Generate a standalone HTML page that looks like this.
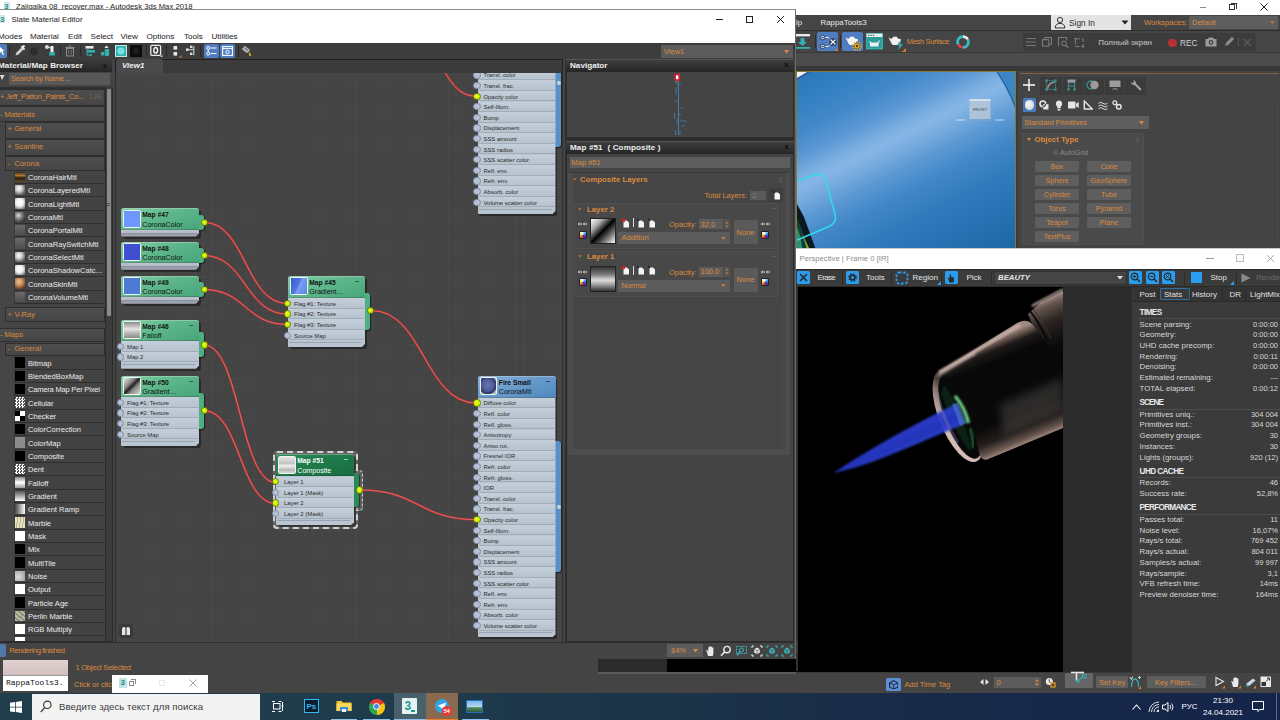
<!DOCTYPE html><html><head><meta charset="utf-8"><title>Slate Material Editor</title><style>
html,body{margin:0;padding:0}
body{width:1280px;height:720px;overflow:hidden;position:relative;background:#444;font-family:"Liberation Sans",sans-serif;font-size:7.5px;color:#e6e6e6}
div,span,svg{position:absolute;box-sizing:border-box}
.t{white-space:nowrap;line-height:1}
.o{color:#dc8a40}
.w{color:#e8e8e8}
.b{font-weight:bold}
</style></head><body>
<div style="left:0px;top:0px;width:1280px;height:15px;background:#fff"></div>
<span class="t" style="left:16px;top:3px;color:#222;font-size:7.7px">Zajigalka 08_recover.max - Autodesk 3ds Max 2018</span>
<div style="left:3.5px;top:2px;width:6.5px;height:8px;background:#cfe9e8;border-radius:1px"></div>
<span class="t" style="left:4.3px;top:3px;color:#16908c;font-size:7.500px;font-weight:bold">3</span>
<div style="left:1199.5px;top:7px;width:6.5px;height:1px;background:#8a8a8a"></div>
<div style="left:1229px;top:4px;width:6px;height:6px;border:1px solid #333"></div>
<div style="left:1231px;top:2.5px;width:6px;height:6px;border:1px solid #333;border-left:none;border-bottom:none"></div>
<svg style="left:1259.500px;top:3px" width="8" height="8" viewBox="0 0 8 8"><path d="M0.500 0.500L7.500 7.500M7.500 0.500L0.500 7.500" stroke="#222" stroke-width="1" fill="none"/></svg>
<div style="left:0px;top:15px;width:1280px;height:15px;background:#454545"></div>
<span class="t" style="left:796px;top:19px;color:#e8e8e8;font-size:7.9px">lp</span>
<span class="t" style="left:820.5px;top:19px;color:#e8e8e8;font-size:7.9px">RappaTools3</span>
<div style="left:1051px;top:15px;width:80px;height:15px;background:#e4e4e4"></div>
<span class="t" style="left:1069px;top:19px;color:#2a2a2a;font-size:8.300px">Sign In</span>
<svg style="left:1054px;top:16px" width="12" height="13" viewBox="0 0 12 13"><circle cx="6" cy="4" r="2.6" fill="none" stroke="#333" stroke-width="1"/><path d="M1.2 12c0-3.2 2-4.6 4.8-4.6s4.8 1.4 4.8 4.6z" fill="none" stroke="#333" stroke-width="1"/></svg>
<svg style="left:1121px;top:20px" width="8" height="5" viewBox="0 0 8 5"><path d="M0.5 0.5L7.5 0.5L4 4.5z" fill="#222"/></svg>
<span class="t o" style="left:1144px;top:19px;font-size:7.5px">Workspaces:</span>
<div style="left:1189px;top:16px;width:89px;height:13px;background:#5e5e5e"></div>
<span class="t o" style="left:1192px;top:19px;font-size:7.5px">Default</span>
<svg style="left:1269.500px;top:21px" width="4.500" height="3.500" viewBox="0 0 6 4"><path d="M0 0L6 0L3 4z" fill="#b8743a"/></svg>
<div style="left:0px;top:30px;width:1280px;height:1px;background:#2e2e2e"></div>
<div style="left:0px;top:31px;width:1280px;height:21px;background:#454545"></div>
<svg style="left:796px;top:33px" width="15" height="17" viewBox="0 0 15 17"><rect x="0" y="1" width="14" height="2.4" fill="#e8e8e8"/><path d="M4.5 5h4v4h2.5L6.5 13 2 9h2.5z" fill="#35b0b0"/><rect x="0" y="14" width="14" height="1.8" fill="#35b0b0"/></svg>
<div style="left:815px;top:35px;width:1px;height:13px;background:#2c2c2c"></div>
<div style="left:817px;top:32px;width:21px;height:19px;background:#4f7dc0;border-radius:2px"></div>
<svg style="left:819px;top:33.500px" width="18" height="16" viewBox="0 0 18 16"><path d="M5.500 3.500h4l3.500 3.500M5.500 12.500h4l3.500-3.500" stroke="#e8e8e8" fill="none" stroke-width="1"/><circle cx="3.600" cy="3.500" r="2.400" fill="#b8c4d4" stroke="#2a3a5a" stroke-width=".9"/><circle cx="3.600" cy="12.500" r="2.400" fill="#b8c4d4" stroke="#2a3a5a" stroke-width=".9"/><path d="M2.400 3.500h2.400M2.400 12.500h2.400" stroke="#2a3a5a" stroke-width=".8"/><rect x="10.500" y="4.500" width="7" height="7" fill="#26344e"/><path d="M11.500 5.500l5 5M16.500 5.500l-5 5" stroke="#f0f0f0" stroke-width="1.300"/></svg>
<svg style="left:835px;top:48px" width="3" height="3" viewBox="0 0 3 3"><path d="M0 3h3V0z" fill="#d87a30"/></svg>
<div style="left:840px;top:35px;width:1px;height:13px;background:#2c2c2c"></div>
<div style="left:842px;top:32px;width:21px;height:19px;background:#4f7dc0;border-radius:2px"></div>
<svg style="left:845px;top:35px" width="14" height="11" viewBox="0 0 14 11"><path d="M0.500 2.500l3 1.500q0.500-1 1.500-1.400V1.800h4v0.800q1 0.400 1.500 1.400 2-0.500 2.500 0.800t-2 2.800q-0.500 1.600-2 2.400h-4q-1.800-1-2.200-3z" fill="#f4f4f4"/></svg>
<svg style="left:851.500px;top:40.500px" width="10" height="10" viewBox="0 0 10 10"><circle cx="5" cy="5" r="3" fill="#e8b020" stroke="#6a4a10" stroke-width=".6"/><circle cx="5" cy="5" r="4.300" fill="none" stroke="#e8b020" stroke-width="1.300" stroke-dasharray="1.400 1.300"/><circle cx="5" cy="5" r="1.200" fill="#4a3a20"/></svg>
<svg style="left:866px;top:33px" width="17" height="17" viewBox="0 0 17 17"><rect x="0.7" y="0.7" width="15.6" height="15" fill="#2a9c9c" stroke="#35b0b0" stroke-width="1.4"/><rect x="0.7" y="0.7" width="15.6" height="3.3" fill="#eee"/><path d="M2 2.3h1.4M4.4 2.3h1.4M6.8 2.3h1.4" stroke="#333" stroke-width="1"/><path d="M3 8.5h1.5l1 1h6l1.5-2h1l-1.5 3v3h-8.5v-3z" fill="#e8f4f4"/></svg>
<svg style="left:888px;top:35px" width="14" height="11" viewBox="0 0 14 11"><path d="M0.500 2.500l3 1.500q0.500-1 1.500-1.400V1.800h4v0.800q1 0.400 1.500 1.400 2-0.500 2.500 0.800t-2 2.800q-0.500 1.600-2 2.400h-4q-1.800-1-2.200-3z" fill="#f0f0f0"/></svg>
<svg style="left:896px;top:40px" width="8" height="10" viewBox="0 0 8 10"><path d="M5 0L1 5.5h2.6L2.4 10 7 4.2H4.4z" fill="#35b0b0"/></svg>
<svg style="left:902px;top:48px" width="4" height="4" viewBox="0 0 4 4"><path d="M0 4h4V0z" fill="#d87a30"/></svg>
<span class="t o" style="left:906.8px;top:38px;font-size:7.500px;letter-spacing:-0.325px">Mesh Surface</span>
<svg style="left:955px;top:34px" width="16" height="16" viewBox="0 0 16 16"><path d="M3.2 10.5A5.4 5.4 0 0 1 8 2.6" stroke="#35c0c4" stroke-width="2.6" fill="none"/><path d="M12.8 5.5A5.4 5.4 0 0 1 8 13.4" stroke="#35c0c4" stroke-width="2.6" fill="none"/><path d="M8 2.6A5.4 5.4 0 0 1 12.8 5.5" stroke="#e8e8e8" stroke-width="2.6" fill="none"/><path d="M8 13.4A5.4 5.4 0 0 1 3.2 10.5" stroke="#e04040" stroke-width="2.6" fill="none"/></svg>
<div style="left:1023px;top:33px;width:233px;height:18px;background:#3c3c3c;border-radius:2px"></div>
<svg style="left:1026px;top:37px" width="10" height="10" viewBox="0 0 10 10"><path d="M0 1.5h10M0 5h10M0 8.5h10" stroke="#777" stroke-width="1.1"/></svg>
<svg style="left:1041.500px;top:36.500px" width="10" height="10" viewBox="0 0 11 11"><rect x="0.5" y="3" width="7" height="7" fill="none" stroke="#888" stroke-width="1"/><path d="M3 3V0.5h7.5V8H7.5" fill="none" stroke="#888" stroke-width="1"/></svg>
<svg style="left:1057.500px;top:36.500px" width="11" height="11" viewBox="0 0 12 12"><path d="M0.5 10V0.5h9v3" fill="none" stroke="#888" stroke-width="1"/><circle cx="6.5" cy="7" r="2.6" fill="none" stroke="#888" stroke-width="1"/><path d="M8.5 9l2.5 2.5" stroke="#888" stroke-width="1.2"/></svg>
<svg style="left:1073.500px;top:36.500px" width="11" height="11" viewBox="0 0 12 12"><rect x="1.5" y="2" width="8.5" height="8.5" fill="none" stroke="#888" stroke-width="1" stroke-dasharray="5 2"/><circle cx="1.5" cy="2" r="1" fill="#888"/><circle cx="10" cy="10.5" r="1" fill="#888"/></svg>
<span class="t" style="left:1098.2px;top:39px;color:#a2a2a2;font-size:8px;font-weight:bold;letter-spacing:-0.265px">Полный экран</span>
<div style="left:1168px;top:38.5px;width:8.5px;height:8.5px;background:#b43434;border-radius:50%"></div>
<span class="t" style="left:1180px;top:39px;color:#d0d0d0;font-size:8.300px">REC</span>
<svg style="left:1205px;top:37px" width="12" height="10" viewBox="0 0 12 10"><path d="M0.5 2h2.5l1-1.5h4l1 1.5h2.500v7.5h-11z" fill="#9a9a9a"/><circle cx="6" cy="5.4" r="2.3" fill="#3c3c3c"/><circle cx="6" cy="5.4" r="1.2" fill="#9a9a9a"/></svg>
<svg style="left:1224px;top:36px" width="11" height="11" viewBox="0 0 11 11"><path d="M1 10l1-3.2L8 .8l2.2 2.2-6 6z" fill="#8a8a8a"/></svg>
<div style="left:1238px;top:38px;width:1px;height:8px;background:#555"></div>
<svg style="left:1243px;top:38px" width="9" height="9" viewBox="0 0 9 9"><path d="M1 1l7 7M8 1L1 8" stroke="#5c5c5c" stroke-width="1.1"/></svg>
<div style="left:0px;top:52px;width:1280px;height:14px;background:#4b4b4b"></div>
<div style="left:0px;top:52px;width:1280px;height:1px;background:#383838"></div>
<div style="left:0px;top:66px;width:1280px;height:5px;background:#383838"></div>
<div style="left:796px;top:71px;width:220px;height:178px;background:#2b7cbc;overflow:hidden;border:1px solid #857832"><div style="left:-1px;top:-1px;width:222px;height:180px;background:linear-gradient(153.4deg,#2a76b8 0%,#3380c2 12%,#4389ca 22%,#5a98d4 30%,#78acdf 36%,#86b6e6 40.5%,#78acdf 45%,#5c99d4 52%,#4388c8 60%,#327cbd 70%,#2873b4 82%,#1c66a4 100%)"></div><svg style="left:0;top:0" width="220" height="178" viewBox="796 71 220 178"><path d="M996 71C1004 82,1010 95,1016 110V71z" fill="#3c86c6"/><path d="M996 71C1004 82,1010 95,1016 110" stroke="#1a5c98" stroke-width="1.2" fill="none"/><path d="M796 71h10l-10 6z" fill="#f0f0f0"/><path d="M796 78l12-7" stroke="#3a3a9a" stroke-width="1"/><path d="M796 203L803 216 815 249H796z" fill="#0b1a22"/><path d="M796 217l5 12 4 20h-9z" fill="#15403a"/><path d="M796 226l3.500 10 2 13h-5.500z" fill="#23957a"/><path d="M801 232l5 17h3z" fill="#8aa828"/><path d="M792 182L814 173.500Q821 172 824 178L834 213Q836 221 829 225L794 240" stroke="#30dcf0" stroke-width="1.5" fill="none"/><rect x="968.500" y="98" width="21" height="20" fill="#b9c8d8" opacity=".85"/><rect x="968.500" y="98" width="21" height="2" fill="#d8e2ee" opacity=".9"/><path d="M955 119h9M994 119h9" stroke="#e4eef8" stroke-width=".8"/><path d="M966 119h26" stroke="#8aa8c8" stroke-width=".8"/><text x="979" y="110" font-size="4.200" fill="#3a4a5a" text-anchor="middle" font-family="Liberation Sans,sans-serif">FRONT</text></svg></div>
<div style="left:1016px;top:71px;width:2px;height:178px;background:#3a3a3a"></div>
<div style="left:1018px;top:71px;width:262px;height:178px;background:#444"></div>
<div style="left:1019.5px;top:72.5px;width:259px;height:1px;background:#86603e"></div>
<div style="left:1040px;top:77px;width:105.6px;height:17.6px;background:#3b3b3b"></div>
<div style="left:1062px;top:78px;width:1px;height:16px;background:#444"></div>
<div style="left:1082.7px;top:78px;width:1px;height:16px;background:#444"></div>
<div style="left:1103.5px;top:78px;width:1px;height:16px;background:#444"></div>
<div style="left:1124.3px;top:78px;width:1px;height:16px;background:#444"></div>
<svg style="left:1023.3px;top:79.3px" width="12" height="12" viewBox="0 0 12 12"><path d="M6 0v12M0 6h12" stroke="#fff" stroke-width="1.400"/></svg>
<svg style="left:1045.0px;top:79.3px" width="12" height="12" viewBox="0 0 12 12"><rect x="1.500" y="1.500" width="9" height="9" fill="none" stroke="#3a9090" stroke-width="1" stroke-dasharray="1.500 1"/><path d="M2.500 10C3 6,6 3.500,9.500 3" stroke="#9a9a9a" stroke-width="1.600" fill="none"/><rect x="0.300" y="0.300" width="2.400" height="2.400" fill="#3a9090"/><rect x="9.300" y="0.300" width="2.400" height="2.400" fill="#3a9090"/><rect x="0.300" y="9.300" width="2.400" height="2.400" fill="#3a9090"/><rect x="9.300" y="9.300" width="2.400" height="2.400" fill="#3a9090"/></svg>
<svg style="left:1066.3px;top:79.3px" width="11" height="12" viewBox="0 0 11 12"><rect x="1.500" y="0.500" width="8" height="3.200" fill="#9c9c9c"/><path d="M2.500 3.700v6.500M8.500 3.700v6.500M2.500 7h6" stroke="#3a9090" stroke-width="1.100" fill="none"/><rect x="1.300" y="9.300" width="2.400" height="2.400" fill="#3a9090"/><rect x="7.300" y="9.300" width="2.400" height="2.400" fill="#3a9090"/></svg>
<svg style="left:1086.0px;top:80.3px" width="14" height="10" viewBox="0 0 14 10"><circle cx="5" cy="5" r="4" fill="none" stroke="#3a9090" stroke-width="1.300"/><circle cx="8.500" cy="5" r="4.200" fill="#9a9a9a"/></svg>
<svg style="left:1108.5px;top:80.3px" width="12" height="10" viewBox="0 0 12 10"><rect x="0.500" y="0.500" width="11" height="6.500" fill="#9c9c9c"/><path d="M3.500 9.300q2.500-1.200 5 0" stroke="#9c9c9c" stroke-width="1" fill="none"/></svg>
<svg style="left:1129.8px;top:79.3px" width="12" height="12" viewBox="0 0 12 12"><path d="M4 4L10.300 10.300" stroke="#a4a4a4" stroke-width="2.100" stroke-linecap="round"/><path d="M1 3.200a2.800 2.800 0 0 0 4.400 2.200 2.800 2.800 0 0 0-2.200-4.400L4.300 2.800 2.800 4.300z" fill="#a4a4a4"/></svg>
<div style="left:1022.8px;top:98px;width:13.4px;height:13.6px;background:#4a7ac0;border-radius:1.500px"></div>
<div style="left:1024.7px;top:100px;width:9.6px;height:9.6px;background:radial-gradient(circle at 40% 40%,#f4f4f4,#cfcfcf);border-radius:50%"></div>
<svg style="left:1039.2px;top:100.0px" width="10" height="10" viewBox="0 0 10 10"><circle cx="3.800" cy="3.800" r="2.800" fill="none" stroke="#e4e4e4" stroke-width="1.700"/><path d="M4.200 4.200h5.300v5.300H4.200z" fill="#e4e4e4"/><path d="M3.800 6.600A2.800 2.800 0 0 0 6.600 3.800" stroke="#444" stroke-width="1.100" fill="none"/></svg>
<svg style="left:1054.7px;top:99.5px" width="8" height="11" viewBox="0 0 8 11"><path d="M4 0.500a3.300 3.300 0 0 1 1.800 6V8.300H2.200V6.500A3.300 3.300 0 0 1 4 0.500z" fill="#e4e4e4"/><rect x="2.600" y="9" width="2.800" height="1.500" fill="#e4e4e4"/></svg>
<svg style="left:1067.9px;top:101.0px" width="11" height="8" viewBox="0 0 11 8"><rect x="0" y="0.500" width="7.500" height="7" rx=".8" fill="#e4e4e4"/><path d="M8 2.800l2.700-1.800v6l-2.700-1.800z" fill="#e4e4e4"/></svg>
<svg style="left:1082.7px;top:100.0px" width="10" height="10" viewBox="0 0 10 10"><path d="M1.300 1v8h8z" fill="none" stroke="#e4e4e4" stroke-width="1.400"/></svg>
<svg style="left:1098.0px;top:100.5px" width="10" height="9" viewBox="0 0 10 9"><path d="M0.500 2.300q2.200-2 4.500 0t4.500 0M0.500 5q2.200-2 4.500 0t4.500 0M0.500 7.700q2.200-2 4.500 0t4.500 0" fill="none" stroke="#d8d8d8" stroke-width="1"/></svg>
<svg style="left:1112.2px;top:100.0px" width="10" height="10" viewBox="0 0 10 10"><circle cx="2.800" cy="2.800" r="1.900" fill="none" stroke="#e4e4e4" stroke-width="1.300"/><circle cx="6.800" cy="6.800" r="2.300" fill="none" stroke="#e4e4e4" stroke-width="1.500"/></svg>
<div style="left:1022px;top:116px;width:127px;height:12.5px;background:#5e5e5e"></div>
<span class="t o" style="left:1024.2px;top:119px;font-size:7.400px;letter-spacing:-0.070px">Standard Primitives</span>
<svg style="left:1139px;top:121px" width="5" height="4" viewBox="0 0 5 4"><path d="M0 0L5 0L2.500 3.500z" fill="#dc8a40"/></svg>
<div style="left:1022px;top:133px;width:122px;height:112px;background:#4a4a4a;border:1px solid #4f4f4f"></div>
<svg style="left:1026.500px;top:138px" width="4" height="3" viewBox="0 0 4 3"><path d="M0 0h4L2 3z" fill="#dc8a40"/></svg>
<span class="t o" style="left:1034.5px;top:136px;font-size:7.800px;font-weight:bold">Object Type</span>
<div style="left:1136px;top:137px;width:3px;height:5px;background:repeating-linear-gradient(#5c5c5c 0 1px,transparent 1px 2px)"></div>
<div style="left:1053px;top:150px;width:5px;height:5px;background:#5a5a5a"></div>
<span class="t" style="left:1060px;top:149px;color:#8a8a8a;font-size:7.200px">AutoGrid</span>
<div style="left:1035px;top:160.5px;width:44px;height:11px;background:#5e5e5e;border-radius:1px"></div>
<span class="t o" style="left:1035px;width:44px;text-align:center;top:163px;font-size:7.200px">Box</span>
<div style="left:1087px;top:160.5px;width:44px;height:11px;background:#5e5e5e;border-radius:1px"></div>
<span class="t o" style="left:1087px;width:44px;text-align:center;top:163px;font-size:7.200px">Cone</span>
<div style="left:1035px;top:174.5px;width:44px;height:11px;background:#5e5e5e;border-radius:1px"></div>
<span class="t o" style="left:1035px;width:44px;text-align:center;top:177px;font-size:7.200px">Sphere</span>
<div style="left:1087px;top:174.5px;width:44px;height:11px;background:#5e5e5e;border-radius:1px"></div>
<span class="t o" style="left:1087px;width:44px;text-align:center;top:177px;font-size:7.200px">GeoSphere</span>
<div style="left:1035px;top:188.5px;width:44px;height:11px;background:#5e5e5e;border-radius:1px"></div>
<span class="t o" style="left:1035px;width:44px;text-align:center;top:191px;font-size:7.200px">Cylinder</span>
<div style="left:1087px;top:188.5px;width:44px;height:11px;background:#5e5e5e;border-radius:1px"></div>
<span class="t o" style="left:1087px;width:44px;text-align:center;top:191px;font-size:7.200px">Tube</span>
<div style="left:1035px;top:202.5px;width:44px;height:11px;background:#5e5e5e;border-radius:1px"></div>
<span class="t o" style="left:1035px;width:44px;text-align:center;top:205px;font-size:7.200px">Torus</span>
<div style="left:1087px;top:202.5px;width:44px;height:11px;background:#5e5e5e;border-radius:1px"></div>
<span class="t o" style="left:1087px;width:44px;text-align:center;top:205px;font-size:7.200px">Pyramid</span>
<div style="left:1035px;top:216.5px;width:44px;height:11px;background:#5e5e5e;border-radius:1px"></div>
<span class="t o" style="left:1035px;width:44px;text-align:center;top:219px;font-size:7.200px">Teapot</span>
<div style="left:1087px;top:216.5px;width:44px;height:11px;background:#5e5e5e;border-radius:1px"></div>
<span class="t o" style="left:1087px;width:44px;text-align:center;top:219px;font-size:7.200px">Plane</span>
<div style="left:1035px;top:230.5px;width:44px;height:11px;background:#5e5e5e;border-radius:1px"></div>
<span class="t o" style="left:1035px;width:44px;text-align:center;top:233px;font-size:7.200px">TextPlus</span>
<div style="left:1274px;top:97px;width:1px;height:150px;background:#3e3e3e"></div>
<div style="left:796px;top:248px;width:484px;height:22px;background:#fff;border-top:1px solid #ccc"></div>
<span class="t" style="left:799.5px;top:255px;color:#8c8c8c;font-size:7.700px">Perspective | Frame 0 [IR]</span>
<div style="left:1206px;top:258px;width:8px;height:1px;background:#999"></div>
<div style="left:1236px;top:254px;width:8px;height:8px;border:1px solid #bbb"></div>
<svg style="left:1266px;top:254px" width="9" height="9" viewBox="0 0 9 9"><path d="M1 1L8 8M8 1L1 8" stroke="#aaa" stroke-width="1" fill="none"/></svg>
<div style="left:796px;top:269px;width:484px;height:18px;background:#3b3b3b;border-top:1px solid #2a2a2a;border-bottom:1px solid #2a2a2a"></div>
<div style="left:797px;top:271px;width:13px;height:13px;background:#2a9df0;border-radius:1.500px"></div>
<svg style="left:799px;top:273px" width="9" height="9" viewBox="0 0 9 9"><path d="M1 1l7 7M8 1L1 8" stroke="#2a2a2a" stroke-width="1.700"/></svg>
<span class="t" style="left:817.5px;top:274px;color:#e4e4e4;font-size:8px;letter-spacing:-0.650px">Erase</span>
<div style="left:842px;top:271px;width:1px;height:14px;background:#2c2c2c"></div>
<div style="left:846px;top:271px;width:13px;height:13px;background:#2a9df0;border-radius:1.500px"></div>
<svg style="left:848px;top:273px" width="9" height="9" viewBox="0 0 9 9"><circle cx="4.500" cy="4.500" r="2.400" fill="none" stroke="#2a2a2a" stroke-width="1.800"/><circle cx="4.500" cy="4.500" r="3.800" fill="none" stroke="#2a2a2a" stroke-width="1.200" stroke-dasharray="1.500 1.500"/></svg>
<span class="t" style="left:866px;top:274px;color:#e4e4e4;font-size:8px">Tools</span>
<div style="left:891px;top:271px;width:1px;height:14px;background:#2c2c2c"></div>
<svg style="left:895px;top:270.500px" width="14" height="14" viewBox="0 0 14 14"><rect x="1.500" y="1.500" width="11" height="11" rx="2.500" fill="none" stroke="#2a9df0" stroke-width="1.800" stroke-dasharray="2.600 1.600"/></svg>
<span class="t" style="left:912.5px;top:274px;color:#e4e4e4;font-size:8px">Region</span>
<svg style="left:937px;top:281px" width="4" height="4" viewBox="0 0 4 4"><path d="M0 4h4V0z" fill="#2a9df0"/></svg>
<div style="left:941px;top:271px;width:1px;height:14px;background:#2c2c2c"></div>
<div style="left:945px;top:271px;width:13px;height:13px;background:#2a9df0;border-radius:1.500px"></div>
<svg style="left:947px;top:272.500px" width="9" height="10" viewBox="0 0 9 10"><path d="M2.500 9.500L1.500 6.500 0.500 5l0.900-0.500 1.200 1V1.500q0.700-0.600 1.300 0v2.300h0.700l0.700 0.200 0.700 0.200 0.900 0.400V7.500l-0.500 2z" fill="#2a2a2a"/></svg>
<span class="t" style="left:966.5px;top:274px;color:#e4e4e4;font-size:8px">Pick</span>
<div style="left:991px;top:271px;width:1px;height:14px;background:#2c2c2c"></div>
<div style="left:994px;top:271px;width:133px;height:14px;background:#454545;border:1px solid #303030"></div>
<span class="t" style="left:998px;top:274px;color:#e8e8e8;font-size:7.800px;font-weight:bold;font-style:italic">BEAUTY</span>
<svg style="left:1117px;top:276px" width="6" height="4" viewBox="0 0 6 4"><path d="M0 0h6L3 3.500z" fill="#e0e0e0"/></svg>
<div style="left:1129px;top:271px;width:13px;height:13px;background:#2a9df0;border-radius:1.500px"></div>
<svg style="left:1130px;top:272px" width="11" height="11" viewBox="0 0 11 11"><circle cx="4.500" cy="4.500" r="3.300" fill="none" stroke="#2a2a2a" stroke-width="1.200"/><path d="M7 7l3 3" stroke="#2a2a2a" stroke-width="1.600"/><path d="M2.800 4.500h3.400M4.500 2.800v3.400" stroke="#2a2a2a" stroke-width="1"/></svg>
<div style="left:1145.5px;top:271px;width:13px;height:13px;background:#2a9df0;border-radius:1.500px"></div>
<svg style="left:1146.5px;top:272px" width="11" height="11" viewBox="0 0 11 11"><circle cx="4.500" cy="4.500" r="3.300" fill="none" stroke="#2a2a2a" stroke-width="1.200"/><path d="M7 7l3 3" stroke="#2a2a2a" stroke-width="1.600"/><path d="M2.800 4.500h3.400" stroke="#2a2a2a" stroke-width="1"/></svg>
<div style="left:1162px;top:271px;width:13px;height:13px;background:#2a9df0;border-radius:1.500px"></div>
<svg style="left:1163px;top:272px" width="11" height="11" viewBox="0 0 11 11"><circle cx="4.500" cy="4.500" r="3.300" fill="none" stroke="#2a2a2a" stroke-width="1.200"/><path d="M7 7l3 3" stroke="#2a2a2a" stroke-width="1.600"/><path d="M3.200 3.200l2.600 2.600M5.800 3.200L3.200 5.800" stroke="#2a2a2a" stroke-width="1"/></svg>
<div style="left:1184px;top:271px;width:1px;height:14px;background:#2c2c2c"></div>
<div style="left:1191px;top:272px;width:11px;height:11px;background:#2a9df0"></div>
<span class="t" style="left:1210.5px;top:274px;color:#e4e4e4;font-size:8px">Stop</span>
<svg style="left:1230px;top:281px" width="4" height="4" viewBox="0 0 4 4"><path d="M0 4h4V0z" fill="#2a9df0"/></svg>
<div style="left:1236px;top:271px;width:1px;height:14px;background:#2c2c2c"></div>
<svg style="left:1241px;top:272.500px" width="10" height="10" viewBox="0 0 10 10"><path d="M0.500 0.500L9.500 5 0.500 9.500z" fill="#8a8a8a"/></svg>
<span class="t" style="left:1256px;top:274px;color:#6c6c6c;font-size:8px">Render</span>
<div style="left:796px;top:287px;width:267px;height:385px;background:#000;overflow:hidden"><svg style="left:0;top:0" width="267" height="384" viewBox="796 287 267 384"><defs>
<filter id="b1" x="-20%" y="-20%" width="140%" height="140%"><feGaussianBlur stdDeviation="0.8"/></filter>
<filter id="b2" x="-20%" y="-20%" width="140%" height="140%"><feGaussianBlur stdDeviation="1.6"/></filter>
<filter id="b3" x="-30%" y="-30%" width="160%" height="160%"><feGaussianBlur stdDeviation="4"/></filter>
<linearGradient id="cyl" gradientUnits="userSpaceOnUse" x1="978" y1="345" x2="1020" y2="447">
<stop offset="0" stop-color="#a08a80"/><stop offset=".04" stop-color="#6e5c55"/><stop offset=".1" stop-color="#1e1a19"/><stop offset=".2" stop-color="#080808"/><stop offset=".72" stop-color="#0a0909"/><stop offset=".86" stop-color="#241e1c"/><stop offset=".95" stop-color="#6a5850"/><stop offset="1" stop-color="#a89086"/></linearGradient>
<linearGradient id="cyl2" gradientUnits="userSpaceOnUse" x1="1040" y1="300" x2="1066" y2="362">
<stop offset="0" stop-color="#a8948c"/><stop offset=".12" stop-color="#64554f"/><stop offset=".35" stop-color="#2a2422"/><stop offset=".7" stop-color="#0c0b0b"/><stop offset="1" stop-color="#050505"/></linearGradient>
<linearGradient id="fl" gradientUnits="userSpaceOnUse" x1="900" y1="420" x2="912" y2="447">
<stop offset="0" stop-color="#3c52e6"/><stop offset=".3" stop-color="#2c40d2"/><stop offset=".75" stop-color="#2636c4"/><stop offset="1" stop-color="#2e44d4"/></linearGradient>
<linearGradient id="rim" gradientUnits="userSpaceOnUse" x1="940" y1="423" x2="976" y2="409">
<stop offset="0" stop-color="#d2bcb4"/><stop offset=".3" stop-color="#b49c94"/><stop offset=".55" stop-color="#8a766e"/><stop offset=".85" stop-color="#2a2422"/><stop offset="1" stop-color="#080808"/></linearGradient>
</defs><path d="M1028 314L1040 303 1063 291V400L1040 345z" fill="url(#cyl2)"/><path d="M1030 311C1037 319,1042 329,1047 340" stroke="#080606" stroke-width="1.800" fill="none"/><path d="M1032 306L1063 289.500" stroke="#b8a49c" stroke-width="2.400" fill="none" filter="url(#b1)"/><path d="M1033 309C1040 318,1046 328,1051 338" stroke="#3a3230" stroke-width="1" fill="none"/><ellipse cx="958" cy="416" rx="19" ry="49" transform="rotate(-22 958 416)" fill="url(#rim)"/><ellipse cx="960" cy="417" rx="15" ry="44.500" transform="rotate(-22 960 417)" fill="#070908"/><path d="M944 385C950 392,960 410,966 430C970 442,971 448,970 451C960 440,946 410,941 392z" fill="#0e2416" filter="url(#b1)"/><path d="M941 370.500L1018 322.500Q1027 318 1033 325L1063 365V428L987 459.500Q981 461.500 979 452C972 420,957 388,941 370.500z" fill="url(#cyl)"/><path d="M939 372.500L1020 325" stroke="#c8b0a8" stroke-width="3.400" fill="none" filter="url(#b1)" opacity=".95"/><path d="M937 376L975 353" stroke="#d4beb6" stroke-width="3" fill="none" filter="url(#b2)" opacity=".7"/><path d="M1000 405L1063 378V410L1004 436z" fill="#4a4644" opacity=".55" filter="url(#b3)"/><path d="M955 396C961 403,966 413,968.500 423" stroke="#74e890" stroke-width="3.400" fill="none" opacity=".92" filter="url(#b1)"/><path d="M970 428C972.500 436,973.500 442,973 448" stroke="#1f6a38" stroke-width="2.400" fill="none" filter="url(#b1)"/><path d="M833.500 473C850 462,890 436,957 403.500L965.500 423.500C920 442,870 466,833.500 473z" fill="url(#fl)" filter="url(#b1)" opacity=".95"/><path d="M952 404L958 402.500 967 423 960 426z" fill="#6ab0d0" opacity=".35"/><path d="M937.500 392C940 408,948 428,958 443" stroke="#8a80b0" stroke-width="3" fill="none" opacity=".35"/></svg></div>
<div style="left:1063px;top:287px;width:69px;height:385px;background:#2b2b2b"></div>
<div style="left:1132px;top:287px;width:148px;height:385px;background:#3b3b3b"></div>
<div style="left:796px;top:287px;width:2px;height:384px;background:#303030"></div>
<div style="left:1133px;top:287px;width:147px;height:14px;background:#343434"></div>
<div style="left:1160px;top:288px;width:29.5px;height:12px;background:#3a3a3a;border:1px solid #2f6f9f;border-radius:1px"></div>
<span class="t" style="left:1139.5px;top:291px;color:#e0e0e0;font-size:8px">Post</span>
<span class="t" style="left:1164px;top:291px;color:#e0e0e0;font-size:8px">Stats</span>
<span class="t" style="left:1192px;top:291px;color:#e0e0e0;font-size:8px">History</span>
<span class="t" style="left:1229.5px;top:291px;color:#e0e0e0;font-size:8px">DR</span>
<span class="t" style="left:1250px;top:291px;color:#e0e0e0;font-size:8px">LightMix</span>
<div style="left:1158px;top:289px;width:1px;height:11px;background:#2a2a2a"></div>
<div style="left:1190px;top:289px;width:1px;height:11px;background:#2a2a2a"></div>
<div style="left:1222px;top:289px;width:1px;height:11px;background:#2a2a2a"></div>
<div style="left:1245px;top:289px;width:1px;height:11px;background:#2a2a2a"></div>
<div style="left:1133px;top:300.5px;width:147px;height:1px;background:#2a2a2a"></div>
<span class="t" style="left:1139.6px;top:309px;color:#e8e8e8;font-size:8.200px;font-weight:bold;letter-spacing:-0.614px">TIMES</span>
<div style="left:1138px;top:318px;width:142px;height:1px;background:#4c4c4c"></div>
<span class="t" style="left:1139.6px;top:321px;color:#d8d8d8;font-size:7.800px">Scene parsing:</span>
<span class="t" style="right:2px;top:321px;color:#d8d8d8;font-size:7.500px">0:00:00</span>
<span class="t" style="left:1139.6px;top:331px;color:#d8d8d8;font-size:7.800px">Geometry:</span>
<span class="t" style="right:2px;top:331px;color:#d8d8d8;font-size:7.500px">0:00:00</span>
<span class="t" style="left:1139.6px;top:342px;color:#d8d8d8;font-size:7.800px">UHD cache precomp:</span>
<span class="t" style="right:2px;top:342px;color:#d8d8d8;font-size:7.500px">0:00:00</span>
<span class="t" style="left:1139.6px;top:353px;color:#d8d8d8;font-size:7.800px">Rendering:</span>
<span class="t" style="right:2px;top:353px;color:#d8d8d8;font-size:7.500px">0:00:11</span>
<span class="t" style="left:1139.6px;top:363px;color:#d8d8d8;font-size:7.800px">Denoising:</span>
<span class="t" style="right:2px;top:363px;color:#d8d8d8;font-size:7.500px">0:00:00</span>
<span class="t" style="left:1139.6px;top:374px;color:#d8d8d8;font-size:7.800px">Estimated remaining:</span>
<span class="t" style="right:2px;top:374px;color:#d8d8d8;font-size:7.500px">---</span>
<span class="t" style="left:1139.6px;top:385px;color:#d8d8d8;font-size:7.800px">TOTAL elapsed:</span>
<span class="t" style="right:2px;top:385px;color:#d8d8d8;font-size:7.500px">0:00:12</span>
<span class="t" style="left:1139.6px;top:399px;color:#e8e8e8;font-size:8.200px;font-weight:bold;letter-spacing:-0.938px">SCENE</span>
<div style="left:1138px;top:408.5px;width:142px;height:1px;background:#4c4c4c"></div>
<span class="t" style="left:1139.6px;top:411px;color:#d8d8d8;font-size:7.800px">Primitives uniq.:</span>
<span class="t" style="right:2px;top:411px;color:#d8d8d8;font-size:7.500px">304 004</span>
<span class="t" style="left:1139.6px;top:421px;color:#d8d8d8;font-size:7.800px">Primitives inst.:</span>
<span class="t" style="right:2px;top:421px;color:#d8d8d8;font-size:7.500px">304 004</span>
<span class="t" style="left:1139.6px;top:432px;color:#d8d8d8;font-size:7.800px">Geometry groups:</span>
<span class="t" style="right:2px;top:432px;color:#d8d8d8;font-size:7.500px">30</span>
<span class="t" style="left:1139.6px;top:443px;color:#d8d8d8;font-size:7.800px">Instances:</span>
<span class="t" style="right:2px;top:443px;color:#d8d8d8;font-size:7.500px">30</span>
<span class="t" style="left:1139.6px;top:454px;color:#d8d8d8;font-size:7.800px">Lights (groups):</span>
<span class="t" style="right:2px;top:454px;color:#d8d8d8;font-size:7.500px">920 (12)</span>
<span class="t" style="left:1139.6px;top:468px;color:#e8e8e8;font-size:8.200px;font-weight:bold;letter-spacing:-0.600px">UHD CACHE</span>
<div style="left:1138px;top:477px;width:142px;height:1px;background:#4c4c4c"></div>
<span class="t" style="left:1139.6px;top:479px;color:#d8d8d8;font-size:7.800px">Records:</span>
<span class="t" style="right:2px;top:479px;color:#d8d8d8;font-size:7.500px">46</span>
<span class="t" style="left:1139.6px;top:490px;color:#d8d8d8;font-size:7.800px">Success rate:</span>
<span class="t" style="right:2px;top:490px;color:#d8d8d8;font-size:7.500px">52,8%</span>
<span class="t" style="left:1139.6px;top:504px;color:#e8e8e8;font-size:8.200px;font-weight:bold;letter-spacing:-0.734px">PERFORMANCE</span>
<div style="left:1138px;top:513.5px;width:142px;height:1px;background:#4c4c4c"></div>
<span class="t" style="left:1139.6px;top:516px;color:#d8d8d8;font-size:7.800px">Passes total:</span>
<span class="t" style="right:2px;top:516px;color:#d8d8d8;font-size:7.500px">11</span>
<span class="t" style="left:1139.6px;top:527px;color:#d8d8d8;font-size:7.800px">Noise level:</span>
<span class="t" style="right:2px;top:527px;color:#d8d8d8;font-size:7.500px">16,07%</span>
<span class="t" style="left:1139.6px;top:537px;color:#d8d8d8;font-size:7.800px">Rays/s total:</span>
<span class="t" style="right:2px;top:537px;color:#d8d8d8;font-size:7.500px">769 452</span>
<span class="t" style="left:1139.6px;top:548px;color:#d8d8d8;font-size:7.800px">Rays/s actual:</span>
<span class="t" style="right:2px;top:548px;color:#d8d8d8;font-size:7.500px">804 011</span>
<span class="t" style="left:1139.6px;top:559px;color:#d8d8d8;font-size:7.800px">Samples/s actual:</span>
<span class="t" style="right:2px;top:559px;color:#d8d8d8;font-size:7.500px">99 997</span>
<span class="t" style="left:1139.6px;top:570px;color:#d8d8d8;font-size:7.800px">Rays/sample:</span>
<span class="t" style="right:2px;top:570px;color:#d8d8d8;font-size:7.500px">3,1</span>
<span class="t" style="left:1139.6px;top:580px;color:#d8d8d8;font-size:7.800px">VFB refresh time:</span>
<span class="t" style="right:2px;top:580px;color:#d8d8d8;font-size:7.500px">14ms</span>
<span class="t" style="left:1139.6px;top:591px;color:#d8d8d8;font-size:7.800px">Preview denoiser time:</span>
<span class="t" style="right:2px;top:591px;color:#d8d8d8;font-size:7.500px">164ms</span>
<div style="left:796px;top:672px;width:484px;height:21px;background:#444;border-top:1px solid #383838"></div>
<div style="left:886px;top:677.5px;width:14.5px;height:13.5px;background:#5b8fd6;border-radius:1.500px"></div>
<svg style="left:888.5px;top:679.5px" width="9.5" height="9.5" viewBox="0 0 8 8"><path d="M4 0.500L7.500 2.500v3.500L4 7.500 0.500 6V2.500z" fill="none" stroke="#223" stroke-width=".9"/><path d="M0.500 2.500L4 4l3.500-1.500M4 4v3.500" stroke="#223" stroke-width=".7" fill="none"/></svg>
<span class="t o" style="left:904.5px;top:681px;font-size:7.500px">Add Time Tag</span>
<svg style="left:980px;top:678.500px" width="9" height="6" viewBox="0 0 9 6"><path d="M0 3l3.500-3v6zM9 3L5.500 0v6z" fill="#e8e8e8"/></svg>
<div style="left:994px;top:676.5px;width:47px;height:11px;background:#5c5c5c"></div>
<span class="t o" style="left:996.5px;top:679px;font-size:7.500px">0</span>
<svg style="left:1034.500px;top:678.500px" width="4" height="7" viewBox="0 0 4 7"><path d="M2 0L4 2.600H0zM2 7L4 4.400H0z" fill="#dc8a40"/></svg>
<svg style="left:1044.500px;top:677px" width="11" height="11" viewBox="0 0 11 11"><circle cx="4.300" cy="4.500" r="3.500" fill="#e8e8e8"/><path d="M4.300 2.200v2.500l1.600 1" stroke="#333" stroke-width=".9" fill="none"/><rect x="6" y="6" width="4" height="4" fill="#444" stroke="#e8a020" stroke-width="1.200"/></svg>
<div style="left:1065px;top:673px;width:28px;height:15px;background:#666;border-radius:1px"></div>
<svg style="left:1071px;top:671px" width="16" height="14" viewBox="0 0 16 14"><path d="M0 1.500h13" stroke="#e8e8e8" stroke-width="1.600"/><path d="M5.500 2v8" stroke="#e8e8e8" stroke-width="1.600"/><path d="M7 9.500C9 9,10 6,12.500 5.500" stroke="#35b0b0" stroke-width="1.200" fill="none"/><rect x="11.500" y="3.500" width="3.500" height="3.500" fill="none" stroke="#35b0b0" stroke-width="1"/><circle cx="7" cy="10" r="1.500" fill="none" stroke="#35b0b0" stroke-width="1"/></svg>
<div style="left:1096px;top:676px;width:31.5px;height:12px;background:#5e5e5e;border-radius:1px"></div>
<span class="t o" style="left:1099px;top:679px;font-size:7.500px">Set Key</span>
<svg style="left:1129px;top:676px" width="13" height="13" viewBox="0 0 13 13"><path d="M2.500 11C2.500 4,4 3,6 3s3.500 1,3.500 8" stroke="#35b0b0" stroke-width="1.300" fill="none"/><path d="M0.500 1l2 2.500M3.500 0.500l-1 3" stroke="#e8e8e8" stroke-width="1"/><path d="M9 1.500h3M10.500 0v3" stroke="#e8e8e8" stroke-width=".8"/><path d="M9 13h3v-3z" fill="#d87a30"/></svg>
<div style="left:1147px;top:676px;width:58.5px;height:12px;background:#5e5e5e;border-radius:1px"></div>
<span class="t o" style="left:1155px;top:679px;font-size:7.500px">Key Filters...</span>
<svg style="left:1215px;top:676px" width="12" height="13" viewBox="0 0 12 13"><path d="M1 1.500l7.500 4L1 9.500z" fill="none" stroke="#e8e8e8" stroke-width="1.100"/><path d="M7 12.500h3v-3z" fill="#d87a30"/></svg>
<svg style="left:1230px;top:676px" width="12" height="13" viewBox="0 0 12 13"><path d="M3 11L2 7 1 5.500 2 5l1.300 1.200V2.200h1.200V1.200h1.300v.6h1.300v.7h1.300V8L7.800 11z" fill="#e8e8e8"/><path d="M8 12.500h3v-3z" fill="#d87a30"/></svg>
<svg style="left:1245px;top:676px" width="12" height="13" viewBox="0 0 12 13"><path d="M1 8L8 2.500l2.500 2L4 10z" fill="#cfd8e8"/><path d="M1 8l3 2-2.500 1z" fill="#35b0b0"/><path d="M8 12.500h3v-3z" fill="#d87a30"/></svg>
<svg style="left:1260px;top:676px" width="12" height="12" viewBox="0 0 12 12"><rect x="0.500" y="0.500" width="10.500" height="10.500" fill="#e8e8e8"/><rect x="1.500" y="6" width="4.500" height="4" fill="#333"/><path d="M6 5.500l3.500-3.500M7 2h2.500v2.500" stroke="#333" stroke-width="1" fill="none"/></svg>
<div style="left:796px;top:640px;width:2px;height:14px;background:#3a3a3a"></div>
<div style="left:0px;top:9px;width:796px;height:650px;background:#444;border-top:1px solid #8c8c8c;border-right:1px solid #6a6a6a"></div>
<div style="left:0px;top:10px;width:795px;height:33px;background:#fff"></div>
<div style="left:0px;top:15px;width:5px;height:8px;background:#cfe9e8;border-radius:0 1px 1px 0"></div>
<span class="t" style="left:0.3px;top:16px;color:#16908c;font-size:7.500px;font-weight:bold">3</span>
<span class="t" style="left:11.5px;top:16px;color:#1a1a1a;font-size:7.9px">Slate Material Editor</span>
<div style="left:716px;top:19px;width:7px;height:1px;background:#222"></div>
<div style="left:746px;top:16px;width:7px;height:7px;border:1px solid #222"></div>
<svg style="left:776px;top:15px" width="9" height="9" viewBox="0 0 9 9"><path d="M1 1L8 8M8 1L1 8" stroke="#222" stroke-width="1" fill="none"/></svg>
<span class="t" style="left:-2px;top:33px;color:#1a1a1a;font-size:8.1px">Modes</span>
<span class="t" style="left:30px;top:33px;color:#1a1a1a;font-size:8.1px">Material</span>
<span class="t" style="left:68px;top:33px;color:#1a1a1a;font-size:8.1px">Edit</span>
<span class="t" style="left:90.5px;top:33px;color:#1a1a1a;font-size:8.1px">Select</span>
<span class="t" style="left:120.5px;top:33px;color:#1a1a1a;font-size:8.1px">View</span>
<span class="t" style="left:146.5px;top:33px;color:#1a1a1a;font-size:8.1px">Options</span>
<span class="t" style="left:184px;top:33px;color:#1a1a1a;font-size:8.1px">Tools</span>
<span class="t" style="left:211.5px;top:33px;color:#1a1a1a;font-size:8.1px">Utilities</span>
<div style="left:0px;top:43px;width:795px;height:16px;background:#3d3d3d"></div>
<div style="left:0px;top:44px;width:7px;height:14px;background:#4f7dc0;border-radius:0 2px 2px 0"></div><svg style="left:0;top:46px" width="7" height="10" viewBox="0 0 7 10"><path d="M0 1l4.5 4H2.6L4 8.6 2.6 9 1.4 5.8 0 7z" fill="#fff"/></svg><div style="left:9px;top:45px;width:1px;height:12px;background:#2a2a2a"></div><svg style="left:14px;top:44px" width="12" height="13" viewBox="0 0 12 13"><path d="M1.5 11.5L2.5 8.5 7.5 3.5 9.5 5.5 4.5 10.5z" fill="#cfcfcf"/><path d="M7.2 2.2l3.4 3.4" stroke="#eee" stroke-width="1.6"/><path d="M8.5 3.5l2-2" stroke="#eee" stroke-width="2.2"/></svg><svg style="left:29px;top:45px" width="12" height="12" viewBox="0 0 12 12"><circle cx="5" cy="6.5" r="4" fill="#2c2c2c"/><path d="M7 2l3 3-3 1z" fill="#353535"/></svg><svg style="left:44px;top:44px" width="12" height="13" viewBox="0 0 12 13"><circle cx="3" cy="3" r="2" fill="#ddd"/><path d="M3 3l4 1" stroke="#ddd" stroke-width="1"/><rect x="6.5" y="2" width="3" height="6" fill="#eee"/><path d="M5.5 8h5l.6 3.5H5z" fill="#35b0b0"/></svg><div style="left:60px;top:45px;width:1px;height:12px;background:#2a2a2a"></div><svg style="left:65px;top:45px" width="10" height="12" viewBox="0 0 10 12"><rect x="1.5" y="3.5" width="7" height="7.5" fill="none" stroke="#8a8a8a" stroke-width="1"/><path d="M0.5 2.5h9M3.5 1h3" stroke="#8a8a8a" stroke-width="1"/><path d="M3.7 5v4.5M6.3 5v4.5" stroke="#777" stroke-width=".8"/></svg><div style="left:80px;top:45px;width:1px;height:12px;background:#2a2a2a"></div><svg style="left:85px;top:45px" width="11" height="12" viewBox="0 0 11 12"><rect x="0.5" y="1" width="8" height="2.6" fill="#e8e8e8"/><rect x="2" y="5" width="8" height="2.6" fill="#35b0b0"/><path d="M2 3.6v6.5h3" stroke="#35b0b0" fill="none" stroke-width="1"/><path d="M5 8.6l2.4 1.5L5 11.6z" fill="#35b0b0"/></svg><svg style="left:100px;top:45px" width="11" height="12" viewBox="0 0 11 12"><path d="M6.5 0.5l2.2 2.5H4.3z" fill="#e8e8e8"/><rect x="4.6" y="4" width="4.6" height="7" rx="1" fill="#35b0b0"/><rect x="1" y="7" width="3" height="3.5" fill="#35b0b0"/></svg><svg style="left:115px;top:45px" width="12" height="12" viewBox="0 0 12 12"><rect x="0.5" y="0.5" width="11" height="11" fill="#35b0b0" stroke="#bfe8ea" stroke-width="1"/><circle cx="6" cy="6" r="3.6" fill="#79dfe2"/></svg><svg style="left:130px;top:45px" width="12" height="12" viewBox="0 0 12 12"><rect x="0" y="0" width="12" height="12" fill="#0c0c0c"/><circle cx="6" cy="6" r="3" fill="#1c1c1c"/></svg><div style="left:146px;top:45px;width:1px;height:12px;background:#2a2a2a"></div><svg style="left:150px;top:44px" width="13" height="14" viewBox="0 0 13 14"><rect x="0.8" y="1.3" width="9.8" height="10" rx="1" fill="#3d3d3d" stroke="#e8e8e8" stroke-width="1.3"/><ellipse cx="5.7" cy="6.3" rx="1.9" ry="2.8" fill="none" stroke="#fff" stroke-width="1.4"/><path d="M10 13h2.5v-2.5z" fill="#c8c8c8"/></svg><div style="left:166px;top:45px;width:1px;height:12px;background:#2a2a2a"></div><svg style="left:172px;top:45px" width="10" height="13" viewBox="0 0 10 13"><rect x="1.5" y="1" width="3.6" height="3.6" fill="#e8e8e8"/><rect x="1.5" y="7" width="3.6" height="3.6" fill="#e8e8e8"/><path d="M7 12.5h2.5V10z" fill="#d87a30"/></svg><svg style="left:185px;top:45px" width="12" height="12" viewBox="0 0 12 12"><rect x="1" y="3.4" width="2.6" height="2.6" fill="#ddd"/><rect x="5" y="0.6" width="2.4" height="2.4" fill="#ddd"/><rect x="5" y="7.6" width="2.4" height="2.4" fill="#ddd"/><path d="M3.6 4.7h5.2M8.8 1.2v9" stroke="#ddd" stroke-width="1" fill="none"/></svg><div style="left:200px;top:45px;width:1px;height:12px;background:#2a2a2a"></div><div style="left:204px;top:44px;width:15px;height:14px;background:#4f7dc0;border-radius:2px"></div><div style="left:220px;top:44px;width:15px;height:14px;background:#4f7dc0;border-radius:2px"></div><svg style="left:206px;top:46px" width="11" height="10" viewBox="0 0 11 10"><circle cx="2.2" cy="2" r="1.5" fill="none" stroke="#fff" stroke-width="1"/><circle cx="2.2" cy="7.6" r="1.5" fill="none" stroke="#fff" stroke-width="1"/><path d="M4.5 2h6M4.5 7.6h6M2.2 3.5v2.6" stroke="#fff" stroke-width="1"/></svg><svg style="left:222px;top:46px" width="11" height="10" viewBox="0 0 11 10"><rect x="0.6" y="0.6" width="9.8" height="8.8" fill="none" stroke="#fff" stroke-width="1.1"/><path d="M0.6 2.6h9.8" stroke="#fff" stroke-width="1"/><circle cx="5.5" cy="6" r="1.7" fill="none" stroke="#fff" stroke-width="1"/></svg><div style="left:238px;top:45px;width:1px;height:12px;background:#2a2a2a"></div><svg style="left:241px;top:45px" width="12" height="12" viewBox="0 0 12 12"><path d="M1 4l3-3 5 4-3 3z" fill="#d8d8d8"/><path d="M2 3l3-1 3 3-2 2z" fill="#8a8a8a"/><path d="M7.5 6l3 4.5-2 .5z" fill="#e8c020"/></svg>
<div style="left:661px;top:45px;width:132px;height:13px;background:#5c5c5c"></div>
<span class="t o" style="left:664px;top:48px;font-size:7.5px">View1</span>
<svg style="left:784px;top:50px" width="5" height="4" viewBox="0 0 5 4"><path d="M0 0L5 0L2.5 3.5z" fill="#dc8a40"/></svg>
<div style="left:0px;top:59px;width:114px;height:584px;background:#444"></div><div style="left:0px;top:59px;width:112px;height:13px;background:linear-gradient(#3c3c3c,#262626)"></div><span class="t" style="left:-2px;top:62px;color:#f0f0f0;font-size:8.1px;font-weight:bold;letter-spacing:0.067px">Material/Map Browser</span><span class="t" style="left:103px;top:62px;color:#111;font-size:7px;font-weight:bold">x</span><svg style="left:0;top:75px" width="5" height="6" viewBox="0 0 5 6"><path d="M0 0h4.5L2 5z" fill="#ddd"/></svg><div style="left:9px;top:73px;width:101px;height:12px;background:#585858"></div><span class="t o" style="left:11px;top:75px;font-size:7.5px;letter-spacing:-0.229px">Search by Name ...</span><div style="left:0px;top:87px;width:106px;height:555px;background:#464646;border-top:2px solid #303030"></div><div style="left:105px;top:87px;width:7px;height:555px;background:#3c3c3c;border-left:1px solid #2c2c2c"></div><div style="left:106.5px;top:89px;width:4.5px;height:227px;background:#8a8a8a;border-radius:1px"></div><div style="left:112px;top:87px;width:1px;height:555px;background:#2a2a2a"></div><div style="left:107px;top:203px;width:3px;height:1px;background:#555"></div><div style="left:107px;top:205px;width:3px;height:1px;background:#555"></div><div style="left:0px;top:89px;width:105px;height:17px;background:linear-gradient(#4e4e4e,#464646);border:1px solid #2e2e2e;border-left:none"></div><span class="t o" style="left:0px;top:93px;font-size:7.5px;letter-spacing:-0.212px">+ Jeff_Patton_Paints_Co...</span><span class="t" style="left:90px;top:93px;font-size:7.5px;color:#7a624e">LIB</span><div style="left:0px;top:106px;width:105px;height:16px;background:linear-gradient(#4e4e4e,#464646);border:1px solid #2e2e2e;border-left:none"></div><span class="t o" style="left:0px;top:111px;font-size:7.5px">- Materials</span><div style="left:5px;top:122px;width:100px;height:16.5px;background:linear-gradient(#4e4e4e,#464646);border:1px solid #2e2e2e;border-left:none;border-left:1px solid #2e2e2e"></div><span class="t o" style="left:7.5px;top:125px;font-size:7.5px">+</span><span class="t o" style="left:14.5px;top:125px;font-size:7.5px">General</span><div style="left:5px;top:138.5px;width:100px;height:17px;background:linear-gradient(#4e4e4e,#464646);border:1px solid #2e2e2e;border-left:none;border-left:1px solid #2e2e2e"></div><span class="t o" style="left:7.5px;top:143px;font-size:7.5px">+</span><span class="t o" style="left:14.5px;top:143px;font-size:7.5px">Scanline</span><div style="left:5px;top:155.5px;width:100px;height:15px;background:linear-gradient(#4e4e4e,#464646);border:1px solid #2e2e2e;border-left:none;border-left:1px solid #2e2e2e"></div><span class="t o" style="left:7.5px;top:160px;font-size:7.5px">-</span><span class="t o" style="left:14.5px;top:160px;font-size:7.5px">Corona</span><div style="left:14px;top:171px;width:91px;height:13px;background:#434343;border-bottom:1px solid #2e2e2e;border-left:1px solid #3a3a3a"></div><div style="left:14.5px;top:171.75px;width:10.5px;height:10.5px;background:linear-gradient(#3a2a1a 0,#b07830 35%,#2a1a10 60%,#6a4a2a 100%)"></div><span class="t" style="left:28px;top:174px;font-size:7.55px;color:#ececec">CoronaHairMtl</span><div style="left:14px;top:184px;width:91px;height:13px;background:#434343;border-bottom:1px solid #2e2e2e;border-left:1px solid #3a3a3a"></div><div style="left:14.5px;top:184.75px;width:10.5px;height:10.5px;background:radial-gradient(circle at 40% 35%,#fff 0,#cfcfcf 35%,#6a6a6a 70%,#3a3a3a 100%)"></div><span class="t" style="left:28px;top:187px;font-size:7.55px;color:#ececec">CoronaLayeredMtl</span><div style="left:14px;top:197px;width:91px;height:14px;background:#434343;border-bottom:1px solid #2e2e2e;border-left:1px solid #3a3a3a"></div><div style="left:14.5px;top:198.25px;width:10.5px;height:10.5px;background:radial-gradient(circle at 45% 40%,#fff 0,#f0f0f0 45%,#9a9a9a 75%,#4a4a4a 100%)"></div><span class="t" style="left:28px;top:201px;font-size:7.55px;color:#ececec">CoronaLightMtl</span><div style="left:14px;top:211px;width:91px;height:13px;background:#434343;border-bottom:1px solid #2e2e2e;border-left:1px solid #3a3a3a"></div><div style="left:14.5px;top:211.75px;width:10.5px;height:10.5px;background:radial-gradient(circle at 35% 35%,#ddd 0,#888 35%,#3a3a3a 75%,#333 100%)"></div><span class="t" style="left:28px;top:214px;font-size:7.55px;color:#ececec">CoronaMtl</span><div style="left:14px;top:224px;width:91px;height:13px;background:#434343;border-bottom:1px solid #2e2e2e;border-left:1px solid #3a3a3a"></div><div style="left:14.5px;top:224.75px;width:10.5px;height:10.5px;background:linear-gradient(#6a6a6a,#4e4e4e)"></div><span class="t" style="left:28px;top:227px;font-size:7.55px;color:#ececec">CoronaPortalMtl</span><div style="left:14px;top:237px;width:91px;height:14px;background:#434343;border-bottom:1px solid #2e2e2e;border-left:1px solid #3a3a3a"></div><div style="left:14.5px;top:238.25px;width:10.5px;height:10.5px;background:linear-gradient(#6a6a6a,#4e4e4e)"></div><span class="t" style="left:28px;top:241px;font-size:7.55px;color:#ececec">CoronaRaySwitchMtl</span><div style="left:14px;top:251px;width:91px;height:13px;background:#434343;border-bottom:1px solid #2e2e2e;border-left:1px solid #3a3a3a"></div><div style="left:14.5px;top:251.75px;width:10.5px;height:10.5px;background:radial-gradient(circle at 40% 35%,#fff 0,#cfcfcf 35%,#6a6a6a 70%,#3a3a3a 100%)"></div><span class="t" style="left:28px;top:254px;font-size:7.55px;color:#ececec">CoronaSelectMtl</span><div style="left:14px;top:264px;width:91px;height:13px;background:#434343;border-bottom:1px solid #2e2e2e;border-left:1px solid #3a3a3a"></div><div style="left:14.5px;top:264.75px;width:10.5px;height:10.5px;background:radial-gradient(circle at 45% 40%,#fff 0,#f0f0f0 45%,#9a9a9a 75%,#4a4a4a 100%)"></div><span class="t" style="left:28px;top:267px;font-size:7.55px;color:#ececec">CoronaShadowCatc...</span><div style="left:14px;top:277px;width:91px;height:14px;background:#434343;border-bottom:1px solid #2e2e2e;border-left:1px solid #3a3a3a"></div><div style="left:14.5px;top:278.25px;width:10.5px;height:10.5px;background:radial-gradient(circle at 40% 35%,#f0c8a0 0,#c08050 45%,#5a3a28 80%,#3a3a3a 100%)"></div><span class="t" style="left:28px;top:281px;font-size:7.55px;color:#ececec">CoronaSkinMtl</span><div style="left:14px;top:291px;width:91px;height:13px;background:#434343;border-bottom:1px solid #2e2e2e;border-left:1px solid #3a3a3a"></div><div style="left:14.5px;top:291.75px;width:10.5px;height:10.5px;background:linear-gradient(#6a6a6a,#4e4e4e)"></div><span class="t" style="left:28px;top:294px;font-size:7.55px;color:#ececec">CoronaVolumeMtl</span><div style="left:5px;top:307px;width:100px;height:14.5px;background:linear-gradient(#4e4e4e,#464646);border:1px solid #2e2e2e;border-left:none;border-left:1px solid #2e2e2e"></div><span class="t o" style="left:7.5px;top:311px;font-size:7.5px">+</span><span class="t o" style="left:14.5px;top:311px;font-size:7.5px">V-Ray</span><div style="left:0px;top:327.5px;width:105px;height:14px;background:linear-gradient(#4e4e4e,#464646);border:1px solid #2e2e2e;border-left:none"></div><span class="t o" style="left:0px;top:331px;font-size:7.5px">- Maps</span><div style="left:5px;top:342.5px;width:100px;height:13px;background:linear-gradient(#4e4e4e,#464646);border:1px solid #2e2e2e;border-left:none;border-left:1px solid #2e2e2e"></div><span class="t o" style="left:7.5px;top:345px;font-size:7.5px">-</span><span class="t o" style="left:14.5px;top:345px;font-size:7.5px">General</span><div style="left:14px;top:356px;width:91px;height:14px;background:#434343;border-bottom:1px solid #2e2e2e;border-left:1px solid #3a3a3a"></div><div style="left:14.5px;top:357.25px;width:10.5px;height:10.5px;background:#000"></div><span class="t" style="left:28px;top:360px;font-size:7.55px;color:#ececec">Bitmap</span><div style="left:14px;top:370px;width:91px;height:13px;background:#434343;border-bottom:1px solid #2e2e2e;border-left:1px solid #3a3a3a"></div><div style="left:14.5px;top:370.75px;width:10.5px;height:10.5px;background:#000"></div><span class="t" style="left:28px;top:373px;font-size:7.55px;color:#ececec">BlendedBoxMap</span><div style="left:14px;top:383px;width:91px;height:13px;background:#434343;border-bottom:1px solid #2e2e2e;border-left:1px solid #3a3a3a"></div><div style="left:14.5px;top:383.75px;width:10.5px;height:10.5px;background:#000"></div><span class="t" style="left:28px;top:386px;font-size:7.55px;color:#ececec;letter-spacing:-0.213px">Camera Map Per Pixel</span><div style="left:14px;top:396px;width:91px;height:14px;background:#434343;border-bottom:1px solid #2e2e2e;border-left:1px solid #3a3a3a"></div><div style="left:14.5px;top:397.25px;width:10.5px;height:10.5px;background:repeating-conic-gradient(#fff 0 25%,#555 0 50%) 0 0/3px 3px"></div><span class="t" style="left:28px;top:400px;font-size:7.55px;color:#ececec">Cellular</span><div style="left:14px;top:410px;width:91px;height:13px;background:#434343;border-bottom:1px solid #2e2e2e;border-left:1px solid #3a3a3a"></div><div style="left:14.5px;top:410.75px;width:10.5px;height:10.5px;background:conic-gradient(#fff 0 25%,#000 0 50%,#fff 0 75%,#000 0)"></div><span class="t" style="left:28px;top:413px;font-size:7.55px;color:#ececec">Checker</span><div style="left:14px;top:423px;width:91px;height:13px;background:#434343;border-bottom:1px solid #2e2e2e;border-left:1px solid #3a3a3a"></div><div style="left:14.5px;top:423.75px;width:10.5px;height:10.5px;background:#000"></div><span class="t" style="left:28px;top:426px;font-size:7.55px;color:#ececec">ColorCorrection</span><div style="left:14px;top:436px;width:91px;height:14px;background:#434343;border-bottom:1px solid #2e2e2e;border-left:1px solid #3a3a3a"></div><div style="left:14.5px;top:437.25px;width:10.5px;height:10.5px;background:#8c8c8c"></div><span class="t" style="left:28px;top:440px;font-size:7.55px;color:#ececec">ColorMap</span><div style="left:14px;top:450px;width:91px;height:13px;background:#434343;border-bottom:1px solid #2e2e2e;border-left:1px solid #3a3a3a"></div><div style="left:14.5px;top:450.75px;width:10.5px;height:10.5px;background:#000"></div><span class="t" style="left:28px;top:453px;font-size:7.55px;color:#ececec">Composite</span><div style="left:14px;top:463px;width:91px;height:13px;background:#434343;border-bottom:1px solid #2e2e2e;border-left:1px solid #3a3a3a"></div><div style="left:14.5px;top:463.75px;width:10.5px;height:10.5px;background:repeating-conic-gradient(#fff 0 25%,#555 0 50%) 0 0/3px 3px"></div><span class="t" style="left:28px;top:466px;font-size:7.55px;color:#ececec">Dent</span><div style="left:14px;top:476px;width:91px;height:14px;background:#434343;border-bottom:1px solid #2e2e2e;border-left:1px solid #3a3a3a"></div><div style="left:14.5px;top:477.25px;width:10.5px;height:10.5px;background:linear-gradient(#8a8a8a,#fff 50%,#9a9a9a)"></div><span class="t" style="left:28px;top:480px;font-size:7.55px;color:#ececec">Falloff</span><div style="left:14px;top:490px;width:91px;height:13px;background:#434343;border-bottom:1px solid #2e2e2e;border-left:1px solid #3a3a3a"></div><div style="left:14.5px;top:490.75px;width:10.5px;height:10.5px;background:linear-gradient(#555,#fff)"></div><span class="t" style="left:28px;top:493px;font-size:7.55px;color:#ececec">Gradient</span><div style="left:14px;top:503px;width:91px;height:13px;background:#434343;border-bottom:1px solid #2e2e2e;border-left:1px solid #3a3a3a"></div><div style="left:14.5px;top:503.75px;width:10.5px;height:10.5px;background:linear-gradient(90deg,#444,#fff)"></div><span class="t" style="left:28px;top:506px;font-size:7.55px;color:#ececec">Gradient Ramp</span><div style="left:14px;top:516px;width:91px;height:14px;background:#434343;border-bottom:1px solid #2e2e2e;border-left:1px solid #3a3a3a"></div><div style="left:14.5px;top:517.25px;width:10.5px;height:10.5px;background:repeating-linear-gradient(95deg,#e8e4c0 0 2px,#b8b088 2px 3px)"></div><span class="t" style="left:28px;top:520px;font-size:7.55px;color:#ececec">Marble</span><div style="left:14px;top:530px;width:91px;height:13px;background:#434343;border-bottom:1px solid #2e2e2e;border-left:1px solid #3a3a3a"></div><div style="left:14.5px;top:530.75px;width:10.5px;height:10.5px;background:#fff"></div><span class="t" style="left:28px;top:533px;font-size:7.55px;color:#ececec">Mask</span><div style="left:14px;top:543px;width:91px;height:13px;background:#434343;border-bottom:1px solid #2e2e2e;border-left:1px solid #3a3a3a"></div><div style="left:14.5px;top:543.75px;width:10.5px;height:10.5px;background:#000"></div><span class="t" style="left:28px;top:546px;font-size:7.55px;color:#ececec">Mix</span><div style="left:14px;top:556px;width:91px;height:14px;background:#434343;border-bottom:1px solid #2e2e2e;border-left:1px solid #3a3a3a"></div><div style="left:14.5px;top:557.25px;width:10.5px;height:10.5px;background:#000"></div><span class="t" style="left:28px;top:560px;font-size:7.55px;color:#ececec">MultiTile</span><div style="left:14px;top:570px;width:91px;height:13px;background:#434343;border-bottom:1px solid #2e2e2e;border-left:1px solid #3a3a3a"></div><div style="left:14.5px;top:570.75px;width:10.5px;height:10.5px;background:radial-gradient(circle at 30% 60%,#ddd,#999)"></div><span class="t" style="left:28px;top:573px;font-size:7.55px;color:#ececec">Noise</span><div style="left:14px;top:583px;width:91px;height:13px;background:#434343;border-bottom:1px solid #2e2e2e;border-left:1px solid #3a3a3a"></div><div style="left:14.5px;top:583.75px;width:10.5px;height:10.5px;background:#fff"></div><span class="t" style="left:28px;top:586px;font-size:7.55px;color:#ececec">Output</span><div style="left:14px;top:596px;width:91px;height:14px;background:#434343;border-bottom:1px solid #2e2e2e;border-left:1px solid #3a3a3a"></div><div style="left:14.5px;top:597.25px;width:10.5px;height:10.5px;background:#000"></div><span class="t" style="left:28px;top:600px;font-size:7.55px;color:#ececec">Particle Age</span><div style="left:14px;top:610px;width:91px;height:13px;background:#434343;border-bottom:1px solid #2e2e2e;border-left:1px solid #3a3a3a"></div><div style="left:14.5px;top:610.75px;width:10.5px;height:10.5px;background:repeating-linear-gradient(40deg,#b8b8a0 0 2px,#8a8a78 2px 3.5px)"></div><span class="t" style="left:28px;top:613px;font-size:7.55px;color:#ececec">Perlin Marble</span><div style="left:14px;top:623px;width:91px;height:13px;background:#434343;border-bottom:1px solid #2e2e2e;border-left:1px solid #3a3a3a"></div><div style="left:14.5px;top:623.75px;width:10.5px;height:10.5px;background:#fff"></div><span class="t" style="left:28px;top:626px;font-size:7.55px;color:#ececec">RGB Multiply</span><div style="left:14px;top:636px;width:91px;height:14px;background:#434343;border-bottom:1px solid #2e2e2e;border-left:1px solid #3a3a3a"></div><div style="left:14.5px;top:637.25px;width:10.5px;height:10.5px;background:#fff"></div><span class="t" style="left:28px;top:640px;font-size:7.55px;color:#ececec">RGB Tint</span><div style="left:0px;top:641px;width:114px;height:2px;background:#2a2a2a"></div>
<div style="left:113px;top:59px;width:453px;height:584px;background:#444"></div>
<div style="left:115px;top:59px;width:1px;height:584px;background:#303030"></div>
<div style="left:562px;top:59px;width:1px;height:584px;background:#303030"></div>
<div style="left:116px;top:642px;width:446px;height:1px;background:#303030"></div>
<div style="left:115px;top:58.5px;width:448px;height:15px;background:#3b3b3b;border:1.500px solid #202020"></div>
<div style="left:116px;top:59px;width:47px;height:14px;background:#4a4a4a;border-radius:2px 2px 0 0"></div>
<span class="t" style="left:122px;top:62px;color:#f0f0f0;font-size:8px;font-style:italic;font-weight:bold">View1</span>
<div style="left:116px;top:73px;width:446px;height:569px;overflow:hidden;background-color:#444;background-image:linear-gradient(90deg,rgba(255,255,255,.018) 1px,transparent 1px),linear-gradient(0deg,rgba(255,255,255,.018) 1px,transparent 1px);background-size:8.45px 8.45px;background-position:3px 2px"><svg style="left:0;top:0" width="446" height="569" viewBox="116 73 446 569"><path d="M204 222.4C245.5 222.4,245.5 303.4,287 303.4M204 255.6C245.5 255.6,245.5 314,287 314M204 289.6C245.5 289.6,245.5 324.4,287 324.4M371 310.5C424.0 310.5,424.0 403.1,477 403.1M204 345C240.0 345,240.0 482.6,276 482.6M204 410.6C240.0 410.6,240.0 503.6,276 503.6M360 490C418.5 490,418.5 519.7,477 519.7M438 60C452 86,460 96.2,477 96.2" fill="none" stroke="#a63636" stroke-width="2.2"/><path d="M204 222.4C245.5 222.4,245.5 303.4,287 303.4M204 255.6C245.5 255.6,245.5 314,287 314M204 289.6C245.5 289.6,245.5 324.4,287 324.4M371 310.5C424.0 310.5,424.0 403.1,477 403.1M204 345C240.0 345,240.0 482.6,276 482.6M204 410.6C240.0 410.6,240.0 503.6,276 503.6M360 490C418.5 490,418.5 519.7,477 519.7M438 60C452 86,460 96.2,477 96.2" fill="none" stroke="#ee6a6a" stroke-width="0.9"/></svg><div style="left:363.0px;top:-118.8px;width:78px;height:261.7px;background:rgba(20,20,20,.55);border-radius:3px;filter:blur(.6px)"></div><div style="left:437.5px;top:-103px;width:7px;height:177px;background:#5a90c8;border-radius:0 3px 3px 0;box-shadow:1px 1px 1px rgba(0,0,0,.5)"></div><div style="left:361.5px;top:-100.8px;width:78px;height:241.7px;background:#b9c5d1;border-radius:0 0 1px 1px;clip-path:polygon(0 0,100% 0,100% calc(100% - 3px),calc(100% - 3px) 100%,0 100%)"></div><div style="left:362.5px;top:-98.6px;width:76px;height:10.4px;background:linear-gradient(#c4cfda,#b6c2ce);border-bottom:1px solid #a0acb8"></div><span class="t" style="left:367.5px;top:-95px;color:#2a2a2a;font-size:5.9px">Diffuse color</span><div style="left:362.5px;top:-88.0px;width:76px;height:10.4px;background:linear-gradient(#c4cfda,#b6c2ce);border-bottom:1px solid #a0acb8"></div><span class="t" style="left:367.5px;top:-84px;color:#2a2a2a;font-size:5.9px">Refl. color</span><div style="left:362.5px;top:-77.39999999999999px;width:76px;height:10.4px;background:linear-gradient(#c4cfda,#b6c2ce);border-bottom:1px solid #a0acb8"></div><span class="t" style="left:367.5px;top:-74px;color:#2a2a2a;font-size:5.9px">Refl. gloss.</span><div style="left:362.5px;top:-66.8px;width:76px;height:10.4px;background:linear-gradient(#c4cfda,#b6c2ce);border-bottom:1px solid #a0acb8"></div><span class="t" style="left:367.5px;top:-63px;color:#2a2a2a;font-size:5.9px">Anisotropy</span><div style="left:362.5px;top:-56.199999999999996px;width:76px;height:10.4px;background:linear-gradient(#c4cfda,#b6c2ce);border-bottom:1px solid #a0acb8"></div><span class="t" style="left:367.5px;top:-53px;color:#2a2a2a;font-size:5.9px">Aniso rot.</span><div style="left:362.5px;top:-45.599999999999994px;width:76px;height:10.4px;background:linear-gradient(#c4cfda,#b6c2ce);border-bottom:1px solid #a0acb8"></div><span class="t" style="left:367.5px;top:-42px;color:#2a2a2a;font-size:5.9px">Fresnel IOR</span><div style="left:362.5px;top:-35.0px;width:76px;height:10.4px;background:linear-gradient(#c4cfda,#b6c2ce);border-bottom:1px solid #a0acb8"></div><span class="t" style="left:367.5px;top:-31px;color:#2a2a2a;font-size:5.9px">Refr. color</span><div style="left:362.5px;top:-24.399999999999988px;width:76px;height:10.4px;background:linear-gradient(#c4cfda,#b6c2ce);border-bottom:1px solid #a0acb8"></div><span class="t" style="left:367.5px;top:-21px;color:#2a2a2a;font-size:5.9px">Refr. gloss.</span><div style="left:362.5px;top:-13.799999999999994px;width:76px;height:10.4px;background:linear-gradient(#c4cfda,#b6c2ce);border-bottom:1px solid #a0acb8"></div><span class="t" style="left:367.5px;top:-10px;color:#2a2a2a;font-size:5.9px">IOR</span><div style="left:362.5px;top:-3.2px;width:76px;height:10.4px;background:linear-gradient(#c4cfda,#b6c2ce);border-bottom:1px solid #a0acb8"></div><span class="t" style="left:367.5px;top:0px;color:#2a2a2a;font-size:5.9px">Transl. color</span><div style="left:362.5px;top:7.400000000000008px;width:76px;height:10.4px;background:linear-gradient(#c4cfda,#b6c2ce);border-bottom:1px solid #a0acb8"></div><span class="t" style="left:367.5px;top:11px;color:#2a2a2a;font-size:5.9px">Transl. frac.</span><div style="left:362.5px;top:18.000000000000004px;width:76px;height:10.4px;background:linear-gradient(#c4cfda,#b6c2ce);border-bottom:1px solid #a0acb8"></div><span class="t" style="left:367.5px;top:22px;color:#2a2a2a;font-size:5.9px">Opacity color</span><div style="left:362.5px;top:28.599999999999998px;width:76px;height:10.4px;background:linear-gradient(#c4cfda,#b6c2ce);border-bottom:1px solid #a0acb8"></div><span class="t" style="left:367.5px;top:32px;color:#2a2a2a;font-size:5.9px">Self-Illum.</span><div style="left:362.5px;top:39.19999999999999px;width:76px;height:10.4px;background:linear-gradient(#c4cfda,#b6c2ce);border-bottom:1px solid #a0acb8"></div><span class="t" style="left:367.5px;top:43px;color:#2a2a2a;font-size:5.9px">Bump</span><div style="left:362.5px;top:49.80000000000001px;width:76px;height:10.4px;background:linear-gradient(#c4cfda,#b6c2ce);border-bottom:1px solid #a0acb8"></div><span class="t" style="left:367.5px;top:53px;color:#2a2a2a;font-size:5.9px">Displacement</span><div style="left:362.5px;top:60.400000000000006px;width:76px;height:10.4px;background:linear-gradient(#c4cfda,#b6c2ce);border-bottom:1px solid #a0acb8"></div><span class="t" style="left:367.5px;top:64px;color:#2a2a2a;font-size:5.9px">SSS amount</span><div style="left:362.5px;top:71.0px;width:76px;height:10.4px;background:linear-gradient(#c4cfda,#b6c2ce);border-bottom:1px solid #a0acb8"></div><span class="t" style="left:367.5px;top:75px;color:#2a2a2a;font-size:5.9px">SSS radius</span><div style="left:362.5px;top:81.6px;width:76px;height:10.4px;background:linear-gradient(#c4cfda,#b6c2ce);border-bottom:1px solid #a0acb8"></div><span class="t" style="left:367.5px;top:85px;color:#2a2a2a;font-size:5.9px">SSS scatter color</span><div style="left:362.5px;top:92.19999999999999px;width:76px;height:10.4px;background:linear-gradient(#c4cfda,#b6c2ce);border-bottom:1px solid #a0acb8"></div><span class="t" style="left:367.5px;top:96px;color:#2a2a2a;font-size:5.9px">Refl. env.</span><div style="left:362.5px;top:102.80000000000001px;width:76px;height:10.4px;background:linear-gradient(#c4cfda,#b6c2ce);border-bottom:1px solid #a0acb8"></div><span class="t" style="left:367.5px;top:106px;color:#2a2a2a;font-size:5.9px">Refr. env.</span><div style="left:362.5px;top:113.4px;width:76px;height:10.4px;background:linear-gradient(#c4cfda,#b6c2ce);border-bottom:1px solid #a0acb8"></div><span class="t" style="left:367.5px;top:117px;color:#2a2a2a;font-size:5.9px">Absorb. color</span><div style="left:362.5px;top:123.99999999999999px;width:76px;height:10.4px;background:linear-gradient(#c4cfda,#b6c2ce);border-bottom:1px solid #a0acb8"></div><span class="t" style="left:367.5px;top:128px;color:#2a2a2a;font-size:5.9px">Volume scatter color</span><div style="left:362.5px;top:135.79999999999998px;width:73px;height:1px;background:#98a4b0"></div><div style="left:361.5px;top:-120.8px;width:78px;height:22px;background:linear-gradient(160deg,#8cb4dc 0%,#6a9ccc 45%,#5088bc 100%);border-radius:2.5px 2.5px 0 0;border-top:1px solid rgba(255,255,255,.35);border-bottom:1px solid rgba(0,0,0,.25)"></div><div style="left:363.5px;top:-119.2px;width:17.6px;height:18px;background:#668;border:1px solid #eef4f0;border-radius:1.5px"></div><span class="t" style="left:382.8px;top:-117px;color:#111;font-size:6.7px;font-weight:bold">Fire</span><span class="t" style="left:382.8px;top:-107px;color:#111;font-size:7.1px">CoronaMtl</span><div style="left:357.4px;top:-96.99999999999999px;width:7.2px;height:7.2px;background:#b4c2d4;border:0.8px solid #7d8da4;border-radius:50%"></div><div style="left:357.4px;top:-86.39999999999999px;width:7.2px;height:7.2px;background:#b4c2d4;border:0.8px solid #7d8da4;border-radius:50%"></div><div style="left:357.4px;top:-75.79999999999998px;width:7.2px;height:7.2px;background:#b4c2d4;border:0.8px solid #7d8da4;border-radius:50%"></div><div style="left:357.4px;top:-65.19999999999999px;width:7.2px;height:7.2px;background:#b4c2d4;border:0.8px solid #7d8da4;border-radius:50%"></div><div style="left:357.4px;top:-54.599999999999994px;width:7.2px;height:7.2px;background:#b4c2d4;border:0.8px solid #7d8da4;border-radius:50%"></div><div style="left:357.4px;top:-43.99999999999999px;width:7.2px;height:7.2px;background:#b4c2d4;border:0.8px solid #7d8da4;border-radius:50%"></div><div style="left:357.4px;top:-33.4px;width:7.2px;height:7.2px;background:#b4c2d4;border:0.8px solid #7d8da4;border-radius:50%"></div><div style="left:357.4px;top:-22.79999999999999px;width:7.2px;height:7.2px;background:#b4c2d4;border:0.8px solid #7d8da4;border-radius:50%"></div><div style="left:357.4px;top:-12.199999999999994px;width:7.2px;height:7.2px;background:#b4c2d4;border:0.8px solid #7d8da4;border-radius:50%"></div><div style="left:357.4px;top:-1.6px;width:7.2px;height:7.2px;background:#b4c2d4;border:0.8px solid #7d8da4;border-radius:50%"></div><div style="left:357.4px;top:9.000000000000009px;width:7.2px;height:7.2px;background:#b4c2d4;border:0.8px solid #7d8da4;border-radius:50%"></div><div style="left:357.4px;top:19.6px;width:7.2px;height:7.2px;background:radial-gradient(circle at 40% 35%,#e6ff30,#c8ea00 70%);border:0.8px solid #6f8200;border-radius:50%"></div><div style="left:357.4px;top:30.199999999999996px;width:7.2px;height:7.2px;background:#b4c2d4;border:0.8px solid #7d8da4;border-radius:50%"></div><div style="left:357.4px;top:40.79999999999999px;width:7.2px;height:7.2px;background:#b4c2d4;border:0.8px solid #7d8da4;border-radius:50%"></div><div style="left:357.4px;top:51.40000000000001px;width:7.2px;height:7.2px;background:#b4c2d4;border:0.8px solid #7d8da4;border-radius:50%"></div><div style="left:357.4px;top:62.00000000000001px;width:7.2px;height:7.2px;background:#b4c2d4;border:0.8px solid #7d8da4;border-radius:50%"></div><div style="left:357.4px;top:72.60000000000001px;width:7.2px;height:7.2px;background:#b4c2d4;border:0.8px solid #7d8da4;border-radius:50%"></div><div style="left:357.4px;top:83.2px;width:7.2px;height:7.2px;background:#b4c2d4;border:0.8px solid #7d8da4;border-radius:50%"></div><div style="left:357.4px;top:93.8px;width:7.2px;height:7.2px;background:#b4c2d4;border:0.8px solid #7d8da4;border-radius:50%"></div><div style="left:357.4px;top:104.40000000000002px;width:7.2px;height:7.2px;background:#b4c2d4;border:0.8px solid #7d8da4;border-radius:50%"></div><div style="left:357.4px;top:115.00000000000001px;width:7.2px;height:7.2px;background:#b4c2d4;border:0.8px solid #7d8da4;border-radius:50%"></div><div style="left:357.4px;top:125.6px;width:7.2px;height:7.2px;background:#b4c2d4;border:0.8px solid #7d8da4;border-radius:50%"></div><div style="left:440.8px;top:8px;width:4px;height:4.4px;background:#c8d4e0;border-radius:50%"></div><div style="left:6.5px;top:137.4px;width:78px;height:28.2px;background:rgba(20,20,20,.55);border-radius:3px;filter:blur(.6px)"></div><div style="left:81px;top:142px;width:7px;height:15px;background:#4fae82;border-radius:0 3px 3px 0;box-shadow:1px 1px 1px rgba(0,0,0,.5)"></div><div style="left:5px;top:154.6px;width:78px;height:9px;background:linear-gradient(#c2c8d2 0,#b4bac6 55%,#8e94a0 60%,#a8aeba 100%);border-radius:0 0 2px 2px;clip-path:polygon(0 0,100% 0,100% calc(100% - 3px),calc(100% - 3px) 100%,0 100%)"></div><div style="left:5px;top:135.4px;width:78px;height:21.2px;background:linear-gradient(160deg,#86cfa8 0%,#5fb88c 45%,#48a57a 100%);border-radius:2.5px 2.5px 0 0;border-top:1px solid rgba(255,255,255,.35);border-bottom:1px solid rgba(0,0,0,.25)"></div><div style="left:7px;top:137.0px;width:17.6px;height:18px;background:#6e96ff;border:1px solid #eef4f0;border-radius:1.5px"></div><span class="t" style="left:26.3px;top:139px;color:#111;font-size:6.7px;font-weight:bold">Map #47</span><span class="t" style="left:26.3px;top:149px;color:#111;font-size:7.1px">CoronaColor</span><div style="left:84.9px;top:145.8px;width:7.2px;height:7.2px;background:radial-gradient(circle at 40% 35%,#e6ff30,#c8ea00 70%);border:0.8px solid #6f8200;border-radius:50%"></div><div style="left:6.5px;top:170.6px;width:78px;height:28.2px;background:rgba(20,20,20,.55);border-radius:3px;filter:blur(.6px)"></div><div style="left:81px;top:175px;width:7px;height:15px;background:#4fae82;border-radius:0 3px 3px 0;box-shadow:1px 1px 1px rgba(0,0,0,.5)"></div><div style="left:5px;top:187.79999999999998px;width:78px;height:9px;background:linear-gradient(#c2c8d2 0,#b4bac6 55%,#8e94a0 60%,#a8aeba 100%);border-radius:0 0 2px 2px;clip-path:polygon(0 0,100% 0,100% calc(100% - 3px),calc(100% - 3px) 100%,0 100%)"></div><div style="left:5px;top:168.6px;width:78px;height:21.2px;background:linear-gradient(160deg,#86cfa8 0%,#5fb88c 45%,#48a57a 100%);border-radius:2.5px 2.5px 0 0;border-top:1px solid rgba(255,255,255,.35);border-bottom:1px solid rgba(0,0,0,.25)"></div><div style="left:7px;top:170.2px;width:17.6px;height:18px;background:#3e50d0;border:1px solid #eef4f0;border-radius:1.5px"></div><span class="t" style="left:26.3px;top:173px;color:#111;font-size:6.7px;font-weight:bold">Map #48</span><span class="t" style="left:26.3px;top:182px;color:#111;font-size:7.1px">CoronaColor</span><div style="left:84.9px;top:179.0px;width:7.2px;height:7.2px;background:radial-gradient(circle at 40% 35%,#e6ff30,#c8ea00 70%);border:0.8px solid #6f8200;border-radius:50%"></div><div style="left:6.5px;top:204.60000000000002px;width:78px;height:28.2px;background:rgba(20,20,20,.55);border-radius:3px;filter:blur(.6px)"></div><div style="left:81px;top:209px;width:7px;height:15px;background:#4fae82;border-radius:0 3px 3px 0;box-shadow:1px 1px 1px rgba(0,0,0,.5)"></div><div style="left:5px;top:221.8px;width:78px;height:9px;background:linear-gradient(#c2c8d2 0,#b4bac6 55%,#8e94a0 60%,#a8aeba 100%);border-radius:0 0 2px 2px;clip-path:polygon(0 0,100% 0,100% calc(100% - 3px),calc(100% - 3px) 100%,0 100%)"></div><div style="left:5px;top:202.60000000000002px;width:78px;height:21.2px;background:linear-gradient(160deg,#86cfa8 0%,#5fb88c 45%,#48a57a 100%);border-radius:2.5px 2.5px 0 0;border-top:1px solid rgba(255,255,255,.35);border-bottom:1px solid rgba(0,0,0,.25)"></div><div style="left:7px;top:204.20000000000002px;width:17.6px;height:18px;background:#4e7ad6;border:1px solid #eef4f0;border-radius:1.5px"></div><span class="t" style="left:26.3px;top:207px;color:#111;font-size:6.7px;font-weight:bold">Map #49</span><span class="t" style="left:26.3px;top:216px;color:#111;font-size:7.1px">CoronaColor</span><div style="left:84.9px;top:213.00000000000003px;width:7.2px;height:7.2px;background:radial-gradient(circle at 40% 35%,#e6ff30,#c8ea00 70%);border:0.8px solid #6f8200;border-radius:50%"></div><div style="left:6.5px;top:248.60000000000002px;width:78px;height:49.099999999999994px;background:rgba(20,20,20,.55);border-radius:3px;filter:blur(.6px)"></div><div style="left:81px;top:259px;width:7px;height:25px;background:#4fae82;border-radius:0 3px 3px 0;box-shadow:1px 1px 1px rgba(0,0,0,.5)"></div><div style="left:5px;top:266.0px;width:78px;height:29.7px;background:#b9c5d1;border-radius:0 0 1px 1px;clip-path:polygon(0 0,100% 0,100% calc(100% - 3px),calc(100% - 3px) 100%,0 100%)"></div><div style="left:6px;top:268.2px;width:76px;height:10.4px;background:linear-gradient(#c4cfda,#b6c2ce);border-bottom:1px solid #a0acb8"></div><span class="t" style="left:11px;top:272px;color:#2a2a2a;font-size:5.9px">Map 1</span><div style="left:6px;top:278.8px;width:76px;height:10.4px;background:linear-gradient(#c4cfda,#b6c2ce);border-bottom:1px solid #a0acb8"></div><span class="t" style="left:11px;top:282px;color:#2a2a2a;font-size:5.9px">Map 2</span><div style="left:6px;top:290.59999999999997px;width:73px;height:1px;background:#98a4b0"></div><div style="left:5px;top:246.60000000000002px;width:78px;height:21.4px;background:linear-gradient(160deg,#86cfa8 0%,#5fb88c 45%,#48a57a 100%);border-radius:2.5px 2.5px 0 0;border-top:1px solid rgba(255,255,255,.35);border-bottom:1px solid rgba(0,0,0,.25)"></div><div style="left:7px;top:248.20000000000002px;width:17.6px;height:18px;background:linear-gradient(#8a8a8a,#e8e8e8 45%,#d0d0d0 55%,#8a8a8a);border:1px solid #eef4f0;border-radius:1.5px"></div><span class="t" style="left:26.3px;top:251px;color:#111;font-size:6.7px;font-weight:bold">Map #46</span><span class="t" style="left:26.3px;top:260px;color:#111;font-size:7.1px">Falloff</span><div style="left:73px;top:251.60000000000002px;width:4px;height:1px;background:#2a4a3a;opacity:.8"></div><div style="left:0.8999999999999999px;top:269.79999999999995px;width:7.2px;height:7.2px;background:#b4c2d4;border:0.8px solid #7d8da4;border-radius:50%"></div><div style="left:0.8999999999999999px;top:280.4px;width:7.2px;height:7.2px;background:#b4c2d4;border:0.8px solid #7d8da4;border-radius:50%"></div><div style="left:84.9px;top:268.4px;width:7.2px;height:7.2px;background:radial-gradient(circle at 40% 35%,#e6ff30,#c8ea00 70%);border:0.8px solid #6f8200;border-radius:50%"></div><div style="left:6.5px;top:304.6px;width:78px;height:70.3px;background:rgba(20,20,20,.55);border-radius:3px;filter:blur(.6px)"></div><div style="left:81px;top:320px;width:7px;height:36px;background:#4fae82;border-radius:0 3px 3px 0;box-shadow:1px 1px 1px rgba(0,0,0,.5)"></div><div style="left:5px;top:322.0px;width:78px;height:50.9px;background:#b9c5d1;border-radius:0 0 1px 1px;clip-path:polygon(0 0,100% 0,100% calc(100% - 3px),calc(100% - 3px) 100%,0 100%)"></div><div style="left:6px;top:324.2px;width:76px;height:10.4px;background:linear-gradient(#c4cfda,#b6c2ce);border-bottom:1px solid #a0acb8"></div><span class="t" style="left:11px;top:328px;color:#2a2a2a;font-size:5.9px">Flag #1: Texture</span><div style="left:6px;top:334.8px;width:76px;height:10.4px;background:linear-gradient(#c4cfda,#b6c2ce);border-bottom:1px solid #a0acb8"></div><span class="t" style="left:11px;top:338px;color:#2a2a2a;font-size:5.9px">Flag #2: Texture</span><div style="left:6px;top:345.4px;width:76px;height:10.4px;background:linear-gradient(#c4cfda,#b6c2ce);border-bottom:1px solid #a0acb8"></div><span class="t" style="left:11px;top:349px;color:#2a2a2a;font-size:5.9px">Flag #3: Texture</span><div style="left:6px;top:356.0px;width:76px;height:10.4px;background:linear-gradient(#c4cfda,#b6c2ce);border-bottom:1px solid #a0acb8"></div><span class="t" style="left:11px;top:360px;color:#2a2a2a;font-size:5.9px">Source Map</span><div style="left:6px;top:367.79999999999995px;width:73px;height:1px;background:#98a4b0"></div><div style="left:5px;top:302.6px;width:78px;height:21.4px;background:linear-gradient(160deg,#86cfa8 0%,#5fb88c 45%,#48a57a 100%);border-radius:2.5px 2.5px 0 0;border-top:1px solid rgba(255,255,255,.35);border-bottom:1px solid rgba(0,0,0,.25)"></div><div style="left:7px;top:304.20000000000005px;width:17.6px;height:18px;background:linear-gradient(135deg,#e8e8e8 0,#888 35%,#222 50%,#888 65%,#d8d8d8 100%);border:1px solid #eef4f0;border-radius:1.5px"></div><span class="t" style="left:26.3px;top:307px;color:#111;font-size:6.7px;font-weight:bold">Map #50</span><span class="t" style="left:26.3px;top:316px;color:#111;font-size:7.1px">Gradient…</span><div style="left:73px;top:307.6px;width:4px;height:1px;background:#2a4a3a;opacity:.8"></div><div style="left:0.8999999999999999px;top:325.79999999999995px;width:7.2px;height:7.2px;background:#b4c2d4;border:0.8px solid #7d8da4;border-radius:50%"></div><div style="left:0.8999999999999999px;top:336.4px;width:7.2px;height:7.2px;background:#b4c2d4;border:0.8px solid #7d8da4;border-radius:50%"></div><div style="left:0.8999999999999999px;top:346.99999999999994px;width:7.2px;height:7.2px;background:#b4c2d4;border:0.8px solid #7d8da4;border-radius:50%"></div><div style="left:0.8999999999999999px;top:357.59999999999997px;width:7.2px;height:7.2px;background:#b4c2d4;border:0.8px solid #7d8da4;border-radius:50%"></div><div style="left:84.9px;top:334.0px;width:7.2px;height:7.2px;background:radial-gradient(circle at 40% 35%,#e6ff30,#c8ea00 70%);border:0.8px solid #6f8200;border-radius:50%"></div><div style="left:173.5px;top:204.60000000000002px;width:77px;height:71.3px;background:rgba(20,20,20,.55);border-radius:3px;filter:blur(.6px)"></div><div style="left:247px;top:220px;width:7px;height:37px;background:#4fae82;border-radius:0 3px 3px 0;box-shadow:1px 1px 1px rgba(0,0,0,.5)"></div><div style="left:172px;top:223.00000000000003px;width:77px;height:50.9px;background:#b9c5d1;border-radius:0 0 1px 1px;clip-path:polygon(0 0,100% 0,100% calc(100% - 3px),calc(100% - 3px) 100%,0 100%)"></div><div style="left:173px;top:225.20000000000005px;width:75px;height:10.4px;background:linear-gradient(#c4cfda,#b6c2ce);border-bottom:1px solid #a0acb8"></div><span class="t" style="left:178px;top:229px;color:#2a2a2a;font-size:5.9px">Flag #1: Texture</span><div style="left:173px;top:235.80000000000004px;width:75px;height:10.4px;background:linear-gradient(#c4cfda,#b6c2ce);border-bottom:1px solid #a0acb8"></div><span class="t" style="left:178px;top:239px;color:#2a2a2a;font-size:5.9px">Flag #2: Texture</span><div style="left:173px;top:246.40000000000003px;width:75px;height:10.4px;background:linear-gradient(#c4cfda,#b6c2ce);border-bottom:1px solid #a0acb8"></div><span class="t" style="left:178px;top:250px;color:#2a2a2a;font-size:5.9px">Flag #3: Texture</span><div style="left:173px;top:257.00000000000006px;width:75px;height:10.4px;background:linear-gradient(#c4cfda,#b6c2ce);border-bottom:1px solid #a0acb8"></div><span class="t" style="left:178px;top:261px;color:#2a2a2a;font-size:5.9px">Source Map</span><div style="left:173px;top:268.8px;width:72px;height:1px;background:#98a4b0"></div><div style="left:172px;top:202.60000000000002px;width:77px;height:22.4px;background:linear-gradient(160deg,#86cfa8 0%,#5fb88c 45%,#48a57a 100%);border-radius:2.5px 2.5px 0 0;border-top:1px solid rgba(255,255,255,.35);border-bottom:1px solid rgba(0,0,0,.25)"></div><div style="left:174px;top:204.20000000000002px;width:17.6px;height:18px;background:linear-gradient(115deg,#3e58d0 0,#5078e0 45%,#7aa0f4 50%,#5a84e4 100%);border:1px solid #eef4f0;border-radius:1.5px"></div><span class="t" style="left:193.3px;top:207px;color:#111;font-size:6.7px;font-weight:bold">Map #45</span><span class="t" style="left:193.3px;top:216px;color:#111;font-size:7.1px">Gradient…</span><div style="left:239px;top:207.60000000000002px;width:4px;height:1px;background:#2a4a3a;opacity:.8"></div><div style="left:167.9px;top:226.80000000000004px;width:7.2px;height:7.2px;background:radial-gradient(circle at 40% 35%,#e6ff30,#c8ea00 70%);border:0.8px solid #6f8200;border-radius:50%"></div><div style="left:167.9px;top:237.40000000000003px;width:7.2px;height:7.2px;background:radial-gradient(circle at 40% 35%,#e6ff30,#c8ea00 70%);border:0.8px solid #6f8200;border-radius:50%"></div><div style="left:167.9px;top:248.00000000000003px;width:7.2px;height:7.2px;background:radial-gradient(circle at 40% 35%,#e6ff30,#c8ea00 70%);border:0.8px solid #6f8200;border-radius:50%"></div><div style="left:167.9px;top:258.6px;width:7.2px;height:7.2px;background:#b4c2d4;border:0.8px solid #7d8da4;border-radius:50%"></div><div style="left:250.9px;top:233.9px;width:7.2px;height:7.2px;background:radial-gradient(circle at 40% 35%,#e6ff30,#c8ea00 70%);border:0.8px solid #6f8200;border-radius:50%"></div><div style="left:156.5px;top:378.3px;width:85px;height:78px;border:2.2px dashed #d2d2d2;border-radius:4px;background:rgba(125,125,125,.5)"></div><div style="left:239px;top:396.5px;width:7.5px;height:41px;border:1.8px dashed #c8c8c8;border-left:none;border-radius:0 4px 4px 0;background:rgba(125,125,125,.5)"></div><div style="left:161.5px;top:383.4px;width:78px;height:70.9px;background:rgba(20,20,20,.55);border-radius:3px;filter:blur(.6px)"></div><div style="left:236px;top:400px;width:7px;height:34px;background:#2a8a58;border-radius:0 3px 3px 0;box-shadow:1px 1px 1px rgba(0,0,0,.5)"></div><div style="left:160px;top:401.4px;width:78px;height:50.9px;background:#b9c5d1;border-radius:0 0 1px 1px;clip-path:polygon(0 0,100% 0,100% calc(100% - 3px),calc(100% - 3px) 100%,0 100%)"></div><div style="left:161px;top:403.59999999999997px;width:76px;height:10.4px;background:linear-gradient(#c4cfda,#b6c2ce);border-bottom:1px solid #a0acb8"></div><span class="t" style="left:168px;top:407px;color:#2a2a2a;font-size:5.9px">Layer 1</span><div style="left:161px;top:414.2px;width:76px;height:10.4px;background:linear-gradient(#c4cfda,#b6c2ce);border-bottom:1px solid #a0acb8"></div><span class="t" style="left:168px;top:418px;color:#2a2a2a;font-size:5.9px">Layer 1 (Mask)</span><div style="left:161px;top:424.79999999999995px;width:76px;height:10.4px;background:linear-gradient(#c4cfda,#b6c2ce);border-bottom:1px solid #a0acb8"></div><span class="t" style="left:168px;top:428px;color:#2a2a2a;font-size:5.9px">Layer 2</span><div style="left:161px;top:435.4px;width:76px;height:10.4px;background:linear-gradient(#c4cfda,#b6c2ce);border-bottom:1px solid #a0acb8"></div><span class="t" style="left:168px;top:439px;color:#2a2a2a;font-size:5.9px">Layer 2 (Mask)</span><div style="left:161px;top:447.19999999999993px;width:73px;height:1px;background:#98a4b0"></div><div style="left:160px;top:381.4px;width:78px;height:22px;background:linear-gradient(160deg,#2a8a58 0%,#1f7a4a 50%,#1a6e42 100%);border-radius:2.5px 2.5px 0 0;border-top:1px solid rgba(255,255,255,.35);border-bottom:1px solid rgba(0,0,0,.25)"></div><div style="left:162px;top:383.0px;width:17.6px;height:18px;background:linear-gradient(#e4e4e4,#c4c4c4 40%,#f0f0f0 55%,#b8b8b8 80%,#d8d8d8);border:1px solid #eef4f0;border-radius:1.5px"></div><span class="t" style="left:181.3px;top:385px;color:#fff;font-size:6.7px;font-weight:bold">Map #51</span><span class="t" style="left:181.3px;top:395px;color:#fff;font-size:7.1px">Composite</span><div style="left:228px;top:386.4px;width:4px;height:1px;background:#9fd;opacity:.8"></div><div style="left:155.9px;top:405.19999999999993px;width:7.2px;height:7.2px;background:radial-gradient(circle at 40% 35%,#e6ff30,#c8ea00 70%);border:0.8px solid #6f8200;border-radius:50%"></div><div style="left:155.9px;top:415.79999999999995px;width:7.2px;height:7.2px;background:#b4c2d4;border:0.8px solid #7d8da4;border-radius:50%"></div><div style="left:155.9px;top:426.3999999999999px;width:7.2px;height:7.2px;background:radial-gradient(circle at 40% 35%,#e6ff30,#c8ea00 70%);border:0.8px solid #6f8200;border-radius:50%"></div><div style="left:155.9px;top:436.99999999999994px;width:7.2px;height:7.2px;background:#b4c2d4;border:0.8px solid #7d8da4;border-radius:50%"></div><div style="left:239.9px;top:413.4px;width:7.2px;height:7.2px;background:radial-gradient(circle at 40% 35%,#e6ff30,#c8ea00 70%);border:0.8px solid #6f8200;border-radius:50%"></div><div style="left:363.0px;top:304.6px;width:78px;height:261.7px;background:rgba(20,20,20,.55);border-radius:3px;filter:blur(.6px)"></div><div style="left:437.5px;top:368px;width:7px;height:131px;background:#5a90c8;border-radius:0 3px 3px 0;box-shadow:1px 1px 1px rgba(0,0,0,.5)"></div><div style="left:361.5px;top:322.6px;width:78px;height:241.7px;background:#b9c5d1;border-radius:0 0 1px 1px;clip-path:polygon(0 0,100% 0,100% calc(100% - 3px),calc(100% - 3px) 100%,0 100%)"></div><div style="left:362.5px;top:324.8px;width:76px;height:10.4px;background:linear-gradient(#c4cfda,#b6c2ce);border-bottom:1px solid #a0acb8"></div><span class="t" style="left:367.5px;top:328px;color:#2a2a2a;font-size:5.9px">Diffuse color</span><div style="left:362.5px;top:335.40000000000003px;width:76px;height:10.4px;background:linear-gradient(#c4cfda,#b6c2ce);border-bottom:1px solid #a0acb8"></div><span class="t" style="left:367.5px;top:339px;color:#2a2a2a;font-size:5.9px">Refl. color</span><div style="left:362.5px;top:346.0px;width:76px;height:10.4px;background:linear-gradient(#c4cfda,#b6c2ce);border-bottom:1px solid #a0acb8"></div><span class="t" style="left:367.5px;top:350px;color:#2a2a2a;font-size:5.9px">Refl. gloss.</span><div style="left:362.5px;top:356.6px;width:76px;height:10.4px;background:linear-gradient(#c4cfda,#b6c2ce);border-bottom:1px solid #a0acb8"></div><span class="t" style="left:367.5px;top:360px;color:#2a2a2a;font-size:5.9px">Anisotropy</span><div style="left:362.5px;top:367.2px;width:76px;height:10.4px;background:linear-gradient(#c4cfda,#b6c2ce);border-bottom:1px solid #a0acb8"></div><span class="t" style="left:367.5px;top:371px;color:#2a2a2a;font-size:5.9px">Aniso rot.</span><div style="left:362.5px;top:377.8px;width:76px;height:10.4px;background:linear-gradient(#c4cfda,#b6c2ce);border-bottom:1px solid #a0acb8"></div><span class="t" style="left:367.5px;top:381px;color:#2a2a2a;font-size:5.9px">Fresnel IOR</span><div style="left:362.5px;top:388.40000000000003px;width:76px;height:10.4px;background:linear-gradient(#c4cfda,#b6c2ce);border-bottom:1px solid #a0acb8"></div><span class="t" style="left:367.5px;top:392px;color:#2a2a2a;font-size:5.9px">Refr. color</span><div style="left:362.5px;top:399.0px;width:76px;height:10.4px;background:linear-gradient(#c4cfda,#b6c2ce);border-bottom:1px solid #a0acb8"></div><span class="t" style="left:367.5px;top:403px;color:#2a2a2a;font-size:5.9px">Refr. gloss.</span><div style="left:362.5px;top:409.6px;width:76px;height:10.4px;background:linear-gradient(#c4cfda,#b6c2ce);border-bottom:1px solid #a0acb8"></div><span class="t" style="left:367.5px;top:413px;color:#2a2a2a;font-size:5.9px">IOR</span><div style="left:362.5px;top:420.2px;width:76px;height:10.4px;background:linear-gradient(#c4cfda,#b6c2ce);border-bottom:1px solid #a0acb8"></div><span class="t" style="left:367.5px;top:424px;color:#2a2a2a;font-size:5.9px">Transl. color</span><div style="left:362.5px;top:430.8px;width:76px;height:10.4px;background:linear-gradient(#c4cfda,#b6c2ce);border-bottom:1px solid #a0acb8"></div><span class="t" style="left:367.5px;top:434px;color:#2a2a2a;font-size:5.9px">Transl. frac.</span><div style="left:362.5px;top:441.40000000000003px;width:76px;height:10.4px;background:linear-gradient(#c4cfda,#b6c2ce);border-bottom:1px solid #a0acb8"></div><span class="t" style="left:367.5px;top:445px;color:#2a2a2a;font-size:5.9px">Opacity color</span><div style="left:362.5px;top:452.0px;width:76px;height:10.4px;background:linear-gradient(#c4cfda,#b6c2ce);border-bottom:1px solid #a0acb8"></div><span class="t" style="left:367.5px;top:456px;color:#2a2a2a;font-size:5.9px">Self-Illum.</span><div style="left:362.5px;top:462.59999999999997px;width:76px;height:10.4px;background:linear-gradient(#c4cfda,#b6c2ce);border-bottom:1px solid #a0acb8"></div><span class="t" style="left:367.5px;top:466px;color:#2a2a2a;font-size:5.9px">Bump</span><div style="left:362.5px;top:473.2px;width:76px;height:10.4px;background:linear-gradient(#c4cfda,#b6c2ce);border-bottom:1px solid #a0acb8"></div><span class="t" style="left:367.5px;top:477px;color:#2a2a2a;font-size:5.9px">Displacement</span><div style="left:362.5px;top:483.8px;width:76px;height:10.4px;background:linear-gradient(#c4cfda,#b6c2ce);border-bottom:1px solid #a0acb8"></div><span class="t" style="left:367.5px;top:487px;color:#2a2a2a;font-size:5.9px">SSS amount</span><div style="left:362.5px;top:494.40000000000003px;width:76px;height:10.4px;background:linear-gradient(#c4cfda,#b6c2ce);border-bottom:1px solid #a0acb8"></div><span class="t" style="left:367.5px;top:498px;color:#2a2a2a;font-size:5.9px">SSS radius</span><div style="left:362.5px;top:505.0px;width:76px;height:10.4px;background:linear-gradient(#c4cfda,#b6c2ce);border-bottom:1px solid #a0acb8"></div><span class="t" style="left:367.5px;top:509px;color:#2a2a2a;font-size:5.9px">SSS scatter color</span><div style="left:362.5px;top:515.5999999999999px;width:76px;height:10.4px;background:linear-gradient(#c4cfda,#b6c2ce);border-bottom:1px solid #a0acb8"></div><span class="t" style="left:367.5px;top:519px;color:#2a2a2a;font-size:5.9px">Refl. env.</span><div style="left:362.5px;top:526.1999999999999px;width:76px;height:10.4px;background:linear-gradient(#c4cfda,#b6c2ce);border-bottom:1px solid #a0acb8"></div><span class="t" style="left:367.5px;top:530px;color:#2a2a2a;font-size:5.9px">Refr. env.</span><div style="left:362.5px;top:536.8px;width:76px;height:10.4px;background:linear-gradient(#c4cfda,#b6c2ce);border-bottom:1px solid #a0acb8"></div><span class="t" style="left:367.5px;top:540px;color:#2a2a2a;font-size:5.9px">Absorb. color</span><div style="left:362.5px;top:547.4px;width:76px;height:10.4px;background:linear-gradient(#c4cfda,#b6c2ce);border-bottom:1px solid #a0acb8"></div><span class="t" style="left:367.5px;top:551px;color:#2a2a2a;font-size:5.9px">Volume scatter color</span><div style="left:362.5px;top:559.1999999999999px;width:73px;height:1px;background:#98a4b0"></div><div style="left:361.5px;top:302.6px;width:78px;height:22px;background:linear-gradient(160deg,#8cb4dc 0%,#6a9ccc 45%,#5088bc 100%);border-radius:2.5px 2.5px 0 0;border-top:1px solid rgba(255,255,255,.35);border-bottom:1px solid rgba(0,0,0,.25)"></div><div style="left:363.5px;top:304.20000000000005px;width:17.6px;height:18px;background:radial-gradient(circle at 45% 45%,#6a78b0 0,#4a5a9a 50%,#2a305a 72%,#9aa 76%,#ccd 100%);border:1px solid #eef4f0;border-radius:1.5px"></div><span class="t" style="left:382.8px;top:307px;color:#111;font-size:6.7px;font-weight:bold">Fire Small</span><span class="t" style="left:382.8px;top:316px;color:#111;font-size:7.1px">CoronaMtl</span><div style="left:429.5px;top:307.6px;width:4px;height:1px;background:#2a3a5a;opacity:.8"></div><div style="left:357.4px;top:326.4px;width:7.2px;height:7.2px;background:radial-gradient(circle at 40% 35%,#e6ff30,#c8ea00 70%);border:0.8px solid #6f8200;border-radius:50%"></div><div style="left:357.4px;top:337.0px;width:7.2px;height:7.2px;background:#b4c2d4;border:0.8px solid #7d8da4;border-radius:50%"></div><div style="left:357.4px;top:347.59999999999997px;width:7.2px;height:7.2px;background:#b4c2d4;border:0.8px solid #7d8da4;border-radius:50%"></div><div style="left:357.4px;top:358.2px;width:7.2px;height:7.2px;background:#b4c2d4;border:0.8px solid #7d8da4;border-radius:50%"></div><div style="left:357.4px;top:368.79999999999995px;width:7.2px;height:7.2px;background:#b4c2d4;border:0.8px solid #7d8da4;border-radius:50%"></div><div style="left:357.4px;top:379.4px;width:7.2px;height:7.2px;background:#b4c2d4;border:0.8px solid #7d8da4;border-radius:50%"></div><div style="left:357.4px;top:390.0px;width:7.2px;height:7.2px;background:#b4c2d4;border:0.8px solid #7d8da4;border-radius:50%"></div><div style="left:357.4px;top:400.59999999999997px;width:7.2px;height:7.2px;background:#b4c2d4;border:0.8px solid #7d8da4;border-radius:50%"></div><div style="left:357.4px;top:411.2px;width:7.2px;height:7.2px;background:#b4c2d4;border:0.8px solid #7d8da4;border-radius:50%"></div><div style="left:357.4px;top:421.79999999999995px;width:7.2px;height:7.2px;background:#b4c2d4;border:0.8px solid #7d8da4;border-radius:50%"></div><div style="left:357.4px;top:432.4px;width:7.2px;height:7.2px;background:#b4c2d4;border:0.8px solid #7d8da4;border-radius:50%"></div><div style="left:357.4px;top:443.0px;width:7.2px;height:7.2px;background:radial-gradient(circle at 40% 35%,#e6ff30,#c8ea00 70%);border:0.8px solid #6f8200;border-radius:50%"></div><div style="left:357.4px;top:453.59999999999997px;width:7.2px;height:7.2px;background:#b4c2d4;border:0.8px solid #7d8da4;border-radius:50%"></div><div style="left:357.4px;top:464.19999999999993px;width:7.2px;height:7.2px;background:#b4c2d4;border:0.8px solid #7d8da4;border-radius:50%"></div><div style="left:357.4px;top:474.79999999999995px;width:7.2px;height:7.2px;background:#b4c2d4;border:0.8px solid #7d8da4;border-radius:50%"></div><div style="left:357.4px;top:485.4px;width:7.2px;height:7.2px;background:#b4c2d4;border:0.8px solid #7d8da4;border-radius:50%"></div><div style="left:357.4px;top:496.0px;width:7.2px;height:7.2px;background:#b4c2d4;border:0.8px solid #7d8da4;border-radius:50%"></div><div style="left:357.4px;top:506.59999999999997px;width:7.2px;height:7.2px;background:#b4c2d4;border:0.8px solid #7d8da4;border-radius:50%"></div><div style="left:357.4px;top:517.1999999999999px;width:7.2px;height:7.2px;background:#b4c2d4;border:0.8px solid #7d8da4;border-radius:50%"></div><div style="left:357.4px;top:527.8px;width:7.2px;height:7.2px;background:#b4c2d4;border:0.8px solid #7d8da4;border-radius:50%"></div><div style="left:357.4px;top:538.4px;width:7.2px;height:7.2px;background:#b4c2d4;border:0.8px solid #7d8da4;border-radius:50%"></div><div style="left:357.4px;top:549.0px;width:7.2px;height:7.2px;background:#b4c2d4;border:0.8px solid #7d8da4;border-radius:50%"></div><div style="left:440.8px;top:431.5px;width:4px;height:4.4px;background:#c8d4e0;border-radius:50%"></div><div style="left:3px;top:551px;width:14px;height:14px;background:#3a3a3a;border-radius:2px"></div><svg style="left:5px;top:553px" width="10" height="10" viewBox="0 0 10 10"><path d="M1 9V4q0-3 2-3t1.4 3V9zM9 9V4q0-3-2-3T5.6 4V9z" fill="#e8e8e8"/></svg></div>
<div style="left:565px;top:59px;width:1px;height:584px;background:#303030"></div><div style="left:566px;top:59px;width:228px;height:13px;background:linear-gradient(#3e3e3e,#262626);border-top:1px solid #555"></div><span class="t" style="left:570px;top:62px;color:#f0f0f0;font-size:8.1px;font-weight:bold;letter-spacing:0.017px">Navigator</span><span class="t" style="left:784.5px;top:61px;color:#0a0a0a;font-size:7px;font-weight:bold">x</span><div style="left:566px;top:72px;width:228px;height:66px;background:#444;border:1px solid #2c2c2c;border-top:none"></div><svg style="left:0;top:0" width="800" height="140" viewBox="0 0 800 140"><rect x="674.200" y="73.700" width="6" height="7.300" fill="#c22838"/><rect x="676" y="75.500" width="2.400" height="3.600" fill="#fff"/><path d="M678.5 84v50" stroke="#4878a4" stroke-width="1.100"/><path d="M676 84h5M676 87v8M674.5 101h3M680.5 108h2M678 113l3 2M674.5 113v6M677 119v5M680 121h7M681 126h4M675.5 130v5M680 131v4M677 134h3" stroke="#4878a4" stroke-width=".9" fill="none"/><path d="M675 82h4" stroke="#6aa" stroke-width=".8"/></svg><div style="left:566px;top:138px;width:228px;height:3px;background:#2c2c2c"></div><div style="left:566px;top:141px;width:228px;height:13px;background:linear-gradient(#3e3e3e,#262626);border-top:1px solid #555"></div><span class="t" style="left:570px;top:144px;color:#f0f0f0;font-size:8.1px;font-weight:bold;letter-spacing:0.114px">Map #51 &nbsp;( Composite )</span><span class="t" style="left:784.5px;top:143px;color:#0a0a0a;font-size:7px;font-weight:bold">x</span><div style="left:566px;top:154px;width:228px;height:488px;background:#444;border:1px solid #2c2c2c;border-top:none"></div><div style="left:570px;top:157px;width:220px;height:11px;background:#5e5e5e"></div><span class="t o" style="left:571.5px;top:159px;font-size:7.5px">Map #51</span><div style="left:567.5px;top:172px;width:222px;height:283px;background:#4d4d4d"></div><div style="left:568px;top:172px;width:221px;height:1px;background:#3a3a3a"></div><div style="left:572.5px;top:173px;width:209px;height:276px;background:#454545"></div><div style="left:782.5px;top:173px;width:2px;height:276px;background:#444"></div><svg style="left:573px;top:178px" width="3.5" height="3" viewBox="0 0 4 3"><path d="M0 0h4L2 3z" fill="#b8743a"/></svg><span class="t o" style="left:580px;top:176px;font-size:7.8px;font-weight:bold">Composite Layers</span><div style="left:779px;top:177px;width:3px;height:5px;background:repeating-linear-gradient(#5c5c5c 0 1px,transparent 1px 2px)"></div><span class="t o" style="left:704.5px;top:192px;font-size:7.5px">Total Layers:</span><div style="left:750px;top:191px;width:16px;height:9px;background:#5a5a5a"></div><span class="t" style="left:752px;top:192px;font-size:7.5px;color:#8a7a6a">2</span><div style="left:769px;top:188px;width:14px;height:14px;background:#3e3e3e;border-radius:1px"></div><svg style="left:772px;top:190px" width="9" height="10" viewBox="0 0 9 10"><path d="M2.5 2.5h3.4L8 4.6V9.5H2.5z" fill="#f4f4f4"/><path d="M1 1l2 2" stroke="#222" stroke-width="1.2"/></svg><div style="left:574px;top:203px;width:204px;height:46px;background:#484848;border:1px solid #4f4f4f"></div><svg style="left:578px;top:207.5px" width="3.5" height="3" viewBox="0 0 4 3"><path d="M0 0h4L2 3z" fill="#b8743a"/></svg><span class="t o" style="left:587px;top:206px;font-size:7.8px;font-weight:bold">Layer 2</span><div style="left:772px;top:208px;width:4px;height:1px;background:#5a5a5a"></div><svg style="left:578px;top:222px" width="9" height="4" viewBox="0 0 9 4"><ellipse cx="2" cy="2" rx="1.8" ry="1.3" fill="#eee"/><ellipse cx="7" cy="2" rx="1.8" ry="1.3" fill="#eee"/><circle cx="2.2" cy="2" r=".8" fill="#111"/><circle cx="7.2" cy="2" r=".8" fill="#111"/></svg><div style="left:578.5px;top:230.5px;width:8px;height:8px;background:conic-gradient(from 200deg,#e03030,#f0e040,#fff,#40a0f0,#3030c0,#e03030);border:1px solid #223;border-radius:1px"></div><div style="left:590px;top:218px;width:25.5px;height:26px;background:linear-gradient(135deg,#fff 0,#aaa 25%,#000 50%,#777 75%,#fff 100%);border:1px solid #222"></div><svg style="left:620.5px;top:217.5px" width="9" height="10" viewBox="0 0 9 10"><path d="M2.5 2.5h3.4L8 4.6V9.5H2.5z" fill="#f4f4f4"/><circle cx="2.6" cy="2.4" r="1.8" fill="#e02020"/></svg><div style="left:632.5px;top:218px;width:1px;height:9px;background:#ddd"></div><svg style="left:636px;top:217.5px" width="9" height="10" viewBox="0 0 9 10"><path d="M2.5 2.5h3.4L8 4.6V9.5H2.5z" fill="#f4f4f4"/><path d="M1 1l2 2" stroke="#222" stroke-width="1.2"/></svg><svg style="left:647px;top:217.5px" width="9" height="10" viewBox="0 0 9 10"><path d="M2.5 2.5h3.4L8 4.6V9.5H2.5z" fill="#f4f4f4"/><path d="M1 1l2 2" stroke="#222" stroke-width="1.2"/></svg><span class="t o" style="left:669px;top:221px;font-size:7.5px">Opacity:</span><div style="left:699px;top:219px;width:24px;height:10px;background:#5c5c5c"></div><span class="t o" style="left:700.5px;top:221px;font-size:7.5px">32,0</span><div style="left:724px;top:219px;width:6px;height:10px;background:#535353"></div><svg style="left:725px;top:220.5px" width="4" height="7" viewBox="0 0 4 7"><path d="M2 0.500L3.600 2.600H0.400zM2 6.500L3.600 4.400H0.400z" fill="#c47e3c"/></svg><div style="left:618px;top:232px;width:112px;height:12px;background:#5c5c5c"></div><span class="t o" style="left:621.5px;top:234px;font-size:7.5px">Addition</span><svg style="left:721px;top:236.5px" width="4.5" height="3.5" viewBox="0 0 5 4"><path d="M0 0L5 0L2.5 3.5z" fill="#c47e3c"/></svg><div style="left:734px;top:220px;width:24px;height:24px;background:#5a5a5a;border-radius:1px"></div><span class="t o" style="left:736.5px;top:229px;font-size:7.5px">None</span><svg style="left:760.5px;top:222px" width="9" height="4" viewBox="0 0 9 4"><ellipse cx="2" cy="2" rx="1.8" ry="1.3" fill="#eee"/><ellipse cx="7" cy="2" rx="1.8" ry="1.3" fill="#eee"/><circle cx="2.2" cy="2" r=".8" fill="#111"/><circle cx="7.2" cy="2" r=".8" fill="#111"/></svg><div style="left:761px;top:230.5px;width:8px;height:8px;background:conic-gradient(from 200deg,#e03030,#f0e040,#fff,#40a0f0,#3030c0,#e03030);border:1px solid #223;border-radius:1px"></div><div style="left:574px;top:250.5px;width:204px;height:46px;background:#484848;border:1px solid #4f4f4f"></div><svg style="left:578px;top:255.0px" width="3.5" height="3" viewBox="0 0 4 3"><path d="M0 0h4L2 3z" fill="#b8743a"/></svg><span class="t o" style="left:587px;top:253px;font-size:7.8px;font-weight:bold">Layer 1</span><div style="left:772px;top:255.5px;width:4px;height:1px;background:#5a5a5a"></div><svg style="left:578px;top:269.5px" width="9" height="4" viewBox="0 0 9 4"><ellipse cx="2" cy="2" rx="1.8" ry="1.3" fill="#eee"/><ellipse cx="7" cy="2" rx="1.8" ry="1.3" fill="#eee"/><circle cx="2.2" cy="2" r=".8" fill="#111"/><circle cx="7.2" cy="2" r=".8" fill="#111"/></svg><div style="left:578.5px;top:278.0px;width:8px;height:8px;background:conic-gradient(from 200deg,#e03030,#f0e040,#fff,#40a0f0,#3030c0,#e03030);border:1px solid #223;border-radius:1px"></div><div style="left:590px;top:265.5px;width:25.5px;height:26px;background:linear-gradient(180deg,#333 0,#777 30%,#ddd 55%,#999 75%,#333 100%);border:1px solid #222"></div><svg style="left:620.5px;top:265.0px" width="9" height="10" viewBox="0 0 9 10"><path d="M2.5 2.5h3.4L8 4.6V9.5H2.5z" fill="#f4f4f4"/><circle cx="2.6" cy="2.4" r="1.8" fill="#e02020"/></svg><div style="left:632.5px;top:265.5px;width:1px;height:9px;background:#ddd"></div><svg style="left:636px;top:265.0px" width="9" height="10" viewBox="0 0 9 10"><path d="M2.5 2.5h3.4L8 4.6V9.5H2.5z" fill="#f4f4f4"/><path d="M1 1l2 2" stroke="#222" stroke-width="1.2"/></svg><svg style="left:647px;top:265.0px" width="9" height="10" viewBox="0 0 9 10"><path d="M2.5 2.5h3.4L8 4.6V9.5H2.5z" fill="#f4f4f4"/><path d="M1 1l2 2" stroke="#222" stroke-width="1.2"/></svg><span class="t o" style="left:669px;top:269px;font-size:7.5px">Opacity:</span><div style="left:699px;top:266.5px;width:24px;height:10px;background:#5c5c5c"></div><span class="t o" style="left:700.5px;top:268px;font-size:7.5px">100,0</span><div style="left:724px;top:266.5px;width:6px;height:10px;background:#535353"></div><svg style="left:725px;top:268.0px" width="4" height="7" viewBox="0 0 4 7"><path d="M2 0.500L3.600 2.600H0.400zM2 6.500L3.600 4.400H0.400z" fill="#c47e3c"/></svg><div style="left:618px;top:279.5px;width:112px;height:12px;background:#5c5c5c"></div><span class="t o" style="left:621.5px;top:282px;font-size:7.5px">Normal</span><svg style="left:721px;top:284.0px" width="4.5" height="3.5" viewBox="0 0 5 4"><path d="M0 0L5 0L2.5 3.5z" fill="#c47e3c"/></svg><div style="left:734px;top:267.5px;width:24px;height:24px;background:#5a5a5a;border-radius:1px"></div><span class="t o" style="left:736.5px;top:276px;font-size:7.5px">None</span><svg style="left:760.5px;top:269.5px" width="9" height="4" viewBox="0 0 9 4"><ellipse cx="2" cy="2" rx="1.8" ry="1.3" fill="#eee"/><ellipse cx="7" cy="2" rx="1.8" ry="1.3" fill="#eee"/><circle cx="2.2" cy="2" r=".8" fill="#111"/><circle cx="7.2" cy="2" r=".8" fill="#111"/></svg><div style="left:761px;top:278.0px;width:8px;height:8px;background:conic-gradient(from 200deg,#e03030,#f0e040,#fff,#40a0f0,#3030c0,#e03030);border:1px solid #223;border-radius:1px"></div>
<div style="left:0px;top:642px;width:795px;height:17px;background:#444"></div>
<div style="left:0px;top:642px;width:795px;height:1px;background:#2e2e2e"></div>
<div style="left:0px;top:644px;width:6px;height:13px;background:#4f78a8;border-radius:0 2px 2px 0"></div>
<span class="t o" style="left:9.6px;top:647px;font-size:7.5px;letter-spacing:-0.420px">Rendering finished</span>
<div style="left:667px;top:644px;width:36px;height:13px;background:#5c5c5c"></div>
<span class="t o" style="left:671px;top:647px;font-size:7.5px">84%</span>
<svg style="left:693px;top:649px" width="5" height="4" viewBox="0 0 5 4"><path d="M0 0L5 0L2.5 3.5z" fill="#dc8a40"/></svg>
<svg style="left:705px;top:645px" width="11" height="12" viewBox="0 0 11 12"><path d="M3 11L2 7 1 5.5 2 5l1.3 1.2V2.2h1.2V1.2h1.3v.6h1.3v.7h1.3V8L7.8 11z" fill="#e8e8e8"/></svg><svg style="left:720px;top:645px" width="12" height="12" viewBox="0 0 12 12"><circle cx="7" cy="4.6" r="3.2" fill="none" stroke="#eee" stroke-width="1.4"/><path d="M4.6 7L1 10.8" stroke="#eee" stroke-width="1.6"/></svg><svg style="left:735px;top:645px" width="13" height="12" viewBox="0 0 13 12"><rect x="1.5" y="1.5" width="10" height="7" fill="none" stroke="#37b5b8" stroke-width="1" stroke-dasharray="2 1"/><circle cx="6.5" cy="5" r="2" fill="none" stroke="#37b5b8" stroke-width="1"/><path d="M5 6.5L2 10.5" stroke="#37b5b8" stroke-width="1.3"/></svg><svg style="left:751px;top:645px" width="12" height="12" viewBox="0 0 12 12"><path d="M1 3V1h2M9 1h2v2M11 9v2H9M3 11H1V9" stroke="#e8e8e8" fill="none" stroke-width="1"/><path d="M6 2.6l2.8 1.6v3.4L6 9.2 3.2 7.6V4.2z" fill="#e8e8e8"/><path d="M3.2 4.2L6 5.8l2.8-1.6M6 5.8v3.4" stroke="#3d3d3d" stroke-width=".6" fill="none"/></svg><svg style="left:766px;top:645px" width="12" height="12" viewBox="0 0 12 12"><path d="M1 3V1h2M9 1h2v2M11 9v2H9M3 11H1V9" stroke="#37b5b8" fill="none" stroke-width="1"/><path d="M6 2.6l2.8 1.6v3.4L6 9.2 3.2 7.6V4.2z" fill="#37b5b8"/><path d="M3.2 4.2L6 5.8l2.8-1.6M6 5.8v3.4" stroke="#3d3d3d" stroke-width=".6" fill="none"/></svg><svg style="left:781px;top:645px" width="12" height="12" viewBox="0 0 12 12"><path d="M1 3V1h2M9 1h2v2M11 9v2H9M3 11H1V9" stroke="#37b5b8" fill="none" stroke-width="1"/><path d="M6 2.6l2.8 1.6v3.4L6 9.2 3.2 7.6V4.2z" fill="#37b5b8"/><path d="M3.2 4.2L6 5.8l2.8-1.6M6 5.8v3.4" stroke="#3d3d3d" stroke-width=".6" fill="none"/></svg>
<div style="left:0px;top:659px;width:796px;height:34px;background:#444"></div>
<div style="left:3px;top:660px;width:65px;height:15px;background:linear-gradient(#e2d2d2,#d2bebe)"></div>
<div style="left:3px;top:675px;width:65px;height:15.5px;background:#fff;border-top:1px solid #999"></div>
<span class="t" style="left:6px;top:679px;color:#111;font-size:8px;font-family:'Liberation Mono',monospace">RappaTools3.</span>
<span class="t o" style="left:75.5px;top:664px;font-size:7.500px;letter-spacing:-0.238px">1 Object Selected</span>
<span class="t o" style="left:74px;top:681px;font-size:7.500px;letter-spacing:-0.013px">Click or click</span>
<div style="left:598px;top:659px;width:69px;height:13px;background:#2b2b2b"></div>
<div style="left:667px;top:659px;width:129px;height:13px;background:#000"></div>
<div style="left:598px;top:672px;width:198px;height:1.5px;background:#5a5a5a"></div>
<div style="left:112px;top:675px;width:96px;height:18px;background:#fff"></div>
<div style="left:119px;top:677.5px;width:8px;height:10px;background:#bfe4e4;border-radius:1px"></div>
<span class="t" style="left:120.5px;top:679px;color:#1a8a8a;font-size:8px;font-weight:bold">3</span>
<div style="left:129px;top:681px;width:5px;height:5px;border:1px solid #8a8a8a"></div>
<div style="left:131px;top:679px;width:5px;height:5px;border:1px solid #8a8a8a;border-left:none;border-bottom:none"></div>
<div style="left:159px;top:679.5px;width:6px;height:6px;border:1px solid #e8e8e8"></div>
<svg style="left:189px;top:679px" width="8" height="8" viewBox="0 0 8 8"><path d="M0.500 0.500l7 7M7.500 0.500l-7 7" stroke="#999" stroke-width=".9"/></svg>
<div style="left:0px;top:693px;width:1280px;height:27px;background:linear-gradient(90deg,#1f3d4b 0%,#1e3c4b 30%,#1c3448 50%,#182b48 70%,#15244a 100%)"></div>
<svg style="left:10px;top:700.500px" width="12" height="12" viewBox="0 0 12 12"><path d="M0 1.700L5 1v4.700H0zM5.800 0.900L12 0v5.700H5.800zM0 6.400h5v4.700L0 10.400zM5.800 6.400H12V12l-6.200-.9z" fill="#fff"/></svg>
<div style="left:32px;top:694px;width:228px;height:26px;background:#f3f3f3"></div>
<svg style="left:40px;top:700px" width="12" height="13" viewBox="0 0 12 13"><circle cx="7.300" cy="4.800" r="3.700" fill="none" stroke="#333" stroke-width="1.100"/><path d="M4.700 7.600L0.800 12" stroke="#333" stroke-width="1.200"/></svg>
<span class="t" style="left:59.1px;top:702px;color:#3a3a3a;font-size:9.600px;letter-spacing:0.045px">Введите здесь текст для поиска</span>
<svg style="left:271.500px;top:701px" width="12" height="11" viewBox="0 0 12 11"><rect x="1.500" y="2.500" width="6.500" height="5.500" fill="none" stroke="#fff" stroke-width="1"/><path d="M0 0.500h3M0 10.500h3M6.500 0.500h3M6.500 10.500h3" stroke="#fff" stroke-width="1"/><path d="M10.500 1v9" stroke="#fff" stroke-width="1"/><rect x="9.700" y="4" width="1.600" height="1.600" fill="#fff"/></svg>
<div style="left:304px;top:699px;width:14.5px;height:14px;background:#0a1e30;border:1px solid #30b8f0"></div>
<span class="t" style="left:306.5px;top:703px;color:#30b8f0;font-size:8px;font-weight:bold">Ps</span>
<svg style="left:336px;top:699px" width="16" height="14" viewBox="0 0 16 14"><path d="M0.500 2h5l1.500 1.500h8.500V12H0.500z" fill="#f4c430"/><rect x="0.500" y="4.500" width="15" height="7.500" fill="#fbd75a"/><rect x="4" y="8" width="8" height="4.500" fill="#3a8ad8"/><rect x="6" y="10" width="4" height="3" fill="#f4f4f4"/></svg>
<div style="left:369px;top:699px;width:15.500px;height:15.500px;border-radius:50%;background:conic-gradient(from -60deg,#e33b2e 0 120deg,#f9c50d 120deg 240deg,#2da94f 240deg 360deg)"></div>
<div style="left:373.300px;top:703.300px;width:7px;height:7px;border-radius:50%;background:#4688f1;border:1.200px solid #fff"></div>
<div style="left:393.5px;top:693px;width:32.5px;height:27px;background:#48606c"></div>
<div style="left:402px;top:698px;width:14.5px;height:16px;background:#e6f2f2;border-radius:1px"></div>
<span class="t" style="left:404.5px;top:700px;color:#1a9a96;font-size:12px;font-weight:bold">3</span>
<div style="left:411px;top:710px;width:4px;height:2px;background:#1a9a96"></div>
<div style="left:426px;top:693px;width:32px;height:27px;background:#8a6a4e"></div>
<div style="left:434.500px;top:698.500px;width:14.500px;height:14.500px;border-radius:50%;background:#30a4e0"></div>
<svg style="left:437px;top:702px" width="10" height="8" viewBox="0 0 10 8"><path d="M0.500 3.800L9 0.500 7.500 7.500 5 5.500 3.800 6.800 3.500 5z" fill="#fff"/></svg>
<div style="left:442px;top:706px;width:9.500px;height:9.500px;border-radius:50%;background:#e83838"></div>
<span class="t" style="left:443.8px;top:709px;color:#fff;font-size:5.500px;font-weight:bold">54</span>
<div style="left:426px;top:718.5px;width:32px;height:1.5px;background:#f08020"></div>
<div style="left:466px;top:699.5px;width:16.5px;height:13px;background:linear-gradient(#7ab8ea 0,#b8daf4 55%,#5a8a5a 60%,#2a5a3a 100%);border:1.300px solid #2a6ab8"></div>
<div style="left:331px;top:718.5px;width:26.3px;height:1.5px;background:#8cc0e8"></div>
<div style="left:363.3px;top:718.5px;width:26.7px;height:1.5px;background:#8cc0e8"></div>
<div style="left:394px;top:718.5px;width:32px;height:1.5px;background:#8cc0e8"></div>
<div style="left:462.4px;top:718.5px;width:26.2px;height:1.5px;background:#8cc0e8"></div>
<svg style="left:1132px;top:704px" width="9" height="6" viewBox="0 0 9 6"><path d="M0.500 5.500L4.500 1 8.500 5.500" stroke="#fff" stroke-width="1.100" fill="none"/></svg>
<svg style="left:1147.5px;top:701px" width="12" height="12" viewBox="0 0 12 12"><path d="M1 11A10 10 0 0 1 11 1" stroke="#ddd" stroke-width="1" fill="none"/><path d="M3.500 11A7.500 7.500 0 0 1 11 3.500" stroke="#ddd" stroke-width="1" fill="none"/><path d="M6 11A5 5 0 0 1 11 6" stroke="#ddd" stroke-width="1" fill="none"/><path d="M8.500 11A2.500 2.500 0 0 1 11 8.500V11z" fill="#ddd"/></svg>
<svg style="left:1162px;top:701px" width="13" height="12" viewBox="0 0 13 12"><path d="M0.500 4h2.500L6 1.500v9L3 8H0.500z" fill="none" stroke="#fff" stroke-width="1"/><path d="M8 4q1.500 2 0 4M9.800 2.500q2.600 3.500 0 7" stroke="#fff" stroke-width=".9" fill="none"/></svg>
<span class="t" style="left:1181.5px;top:703px;color:#fff;font-size:8px">РУС</span>
<span class="t" style="left:1196px;width:54px;text-align:center;top:697px;color:#fff;font-size:8px">21:30</span>
<span class="t" style="left:1196px;width:54px;text-align:center;top:709px;color:#fff;font-size:8px">24.04.2021</span>
<svg style="left:1252px;top:701px" width="12" height="12" viewBox="0 0 12 12"><path d="M0.500 0.500h11v8H7.500L6 10.500V8.500H0.500z" fill="none" stroke="#fff" stroke-width="1"/></svg>
<div style="left:1276px;top:693px;width:1px;height:27px;background:#5a6a7a"></div>
</body></html>
